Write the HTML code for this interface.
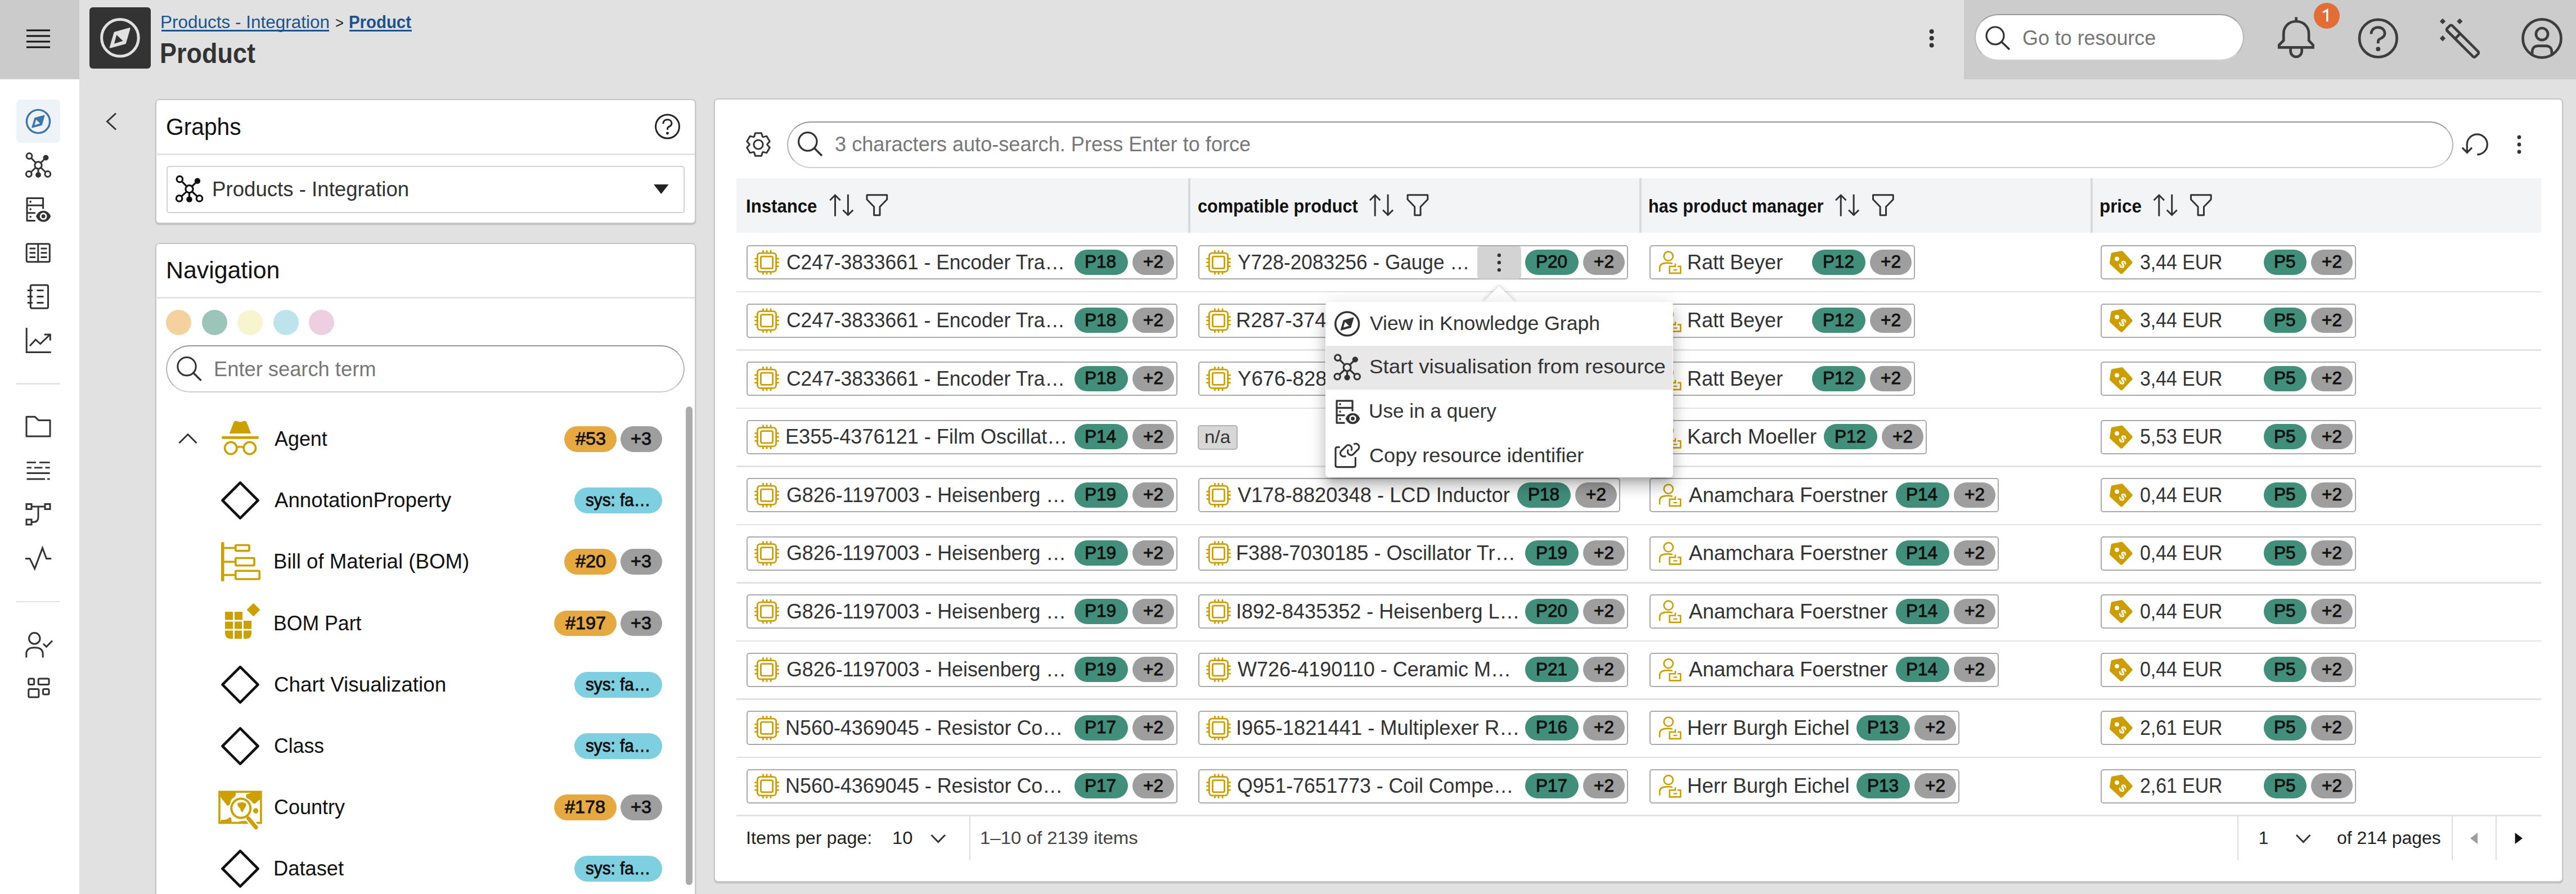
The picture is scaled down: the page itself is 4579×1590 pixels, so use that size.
<!DOCTYPE html>
<html><head><meta charset="utf-8"><title>Product</title>
<style>
html,body{margin:0;padding:0}
body{width:4579px;height:1590px;overflow:hidden;position:relative;background:#e1e1e1;font-family:"Liberation Sans",sans-serif;color:#222}
.a,.c{position:absolute}
.t{position:absolute;white-space:nowrap;line-height:1;transform-origin:0 0}
svg{position:absolute;left:0;top:0;overflow:visible}
</style></head><body>
<div class="a" style="left:0;top:0;width:141px;height:1590px;background:#fff"></div>
<div class="a" style="left:0;top:0;width:141px;height:141px;background:#cbcbcb"></div>
<div class="a" style="left:29px;top:177px;width:78px;height:77px;background:#eef3f8;border-radius:7px"></div>
<div class="a" style="left:29px;top:680.5px;width:78px;height:3px;background:#e4e4e4"></div>
<div class="a" style="left:29px;top:1069px;width:78px;height:2px;background:#e4e4e4"></div>
<div class="a" style="left:3491px;top:0;width:1088px;height:141px;background:#cccccc"></div>
<div class="a" style="left:159px;top:13px;width:109px;height:109px;background:#333;border-radius:6px"></div>
<div class="a" style="left:3510px;top:25px;width:479px;height:83px;box-sizing:border-box;background:#fff;border:2.2px solid;border-color:#9a9a9a #b8b8b8 #d0d0d0 #b8b8b8;border-radius:42px"></div>
<div class="a" style="left:4113px;top:5px;width:46px;height:46px;border-radius:50%;background:#e36d37"></div>
<div class="a" style="left:275.5px;top:175.5px;width:961px;height:222px;background:#fff;border:2px solid #c6c6c6;border-radius:7px;box-shadow:0 2px 2px rgba(0,0,0,.16);box-sizing:border-box"></div>
<div class="a" style="left:277px;top:273px;width:958px;height:3px;background:#e2e2e2"></div>
<div class="a" style="left:296px;top:295px;width:921px;height:84px;box-sizing:border-box;border:2px solid #d2d2d2;border-radius:5px"></div>
<div class="a" style="left:275.5px;top:432px;width:961px;height:1200px;background:#fff;border:2px solid #c6c6c6;border-radius:7px;box-shadow:0 2px 2px rgba(0,0,0,.16);box-sizing:border-box"></div>
<div class="a" style="left:277px;top:528px;width:958px;height:3px;background:#e2e2e2"></div>
<div class="a" style="left:295.1px;top:551px;width:45px;height:45px;border-radius:50%;background:#f3d29d"></div>
<div class="a" style="left:358.5px;top:551px;width:45px;height:45px;border-radius:50%;background:#9cc5b9"></div>
<div class="a" style="left:422.0px;top:551px;width:45px;height:45px;border-radius:50%;background:#f7f4d0"></div>
<div class="a" style="left:485.5px;top:551px;width:45px;height:45px;border-radius:50%;background:#bde4ed"></div>
<div class="a" style="left:549.0px;top:551px;width:45px;height:45px;border-radius:50%;background:#edcfe1"></div>
<div class="a" style="left:295px;top:614.3px;width:922px;height:84px;box-sizing:border-box;border:2.2px solid;border-color:#949494 #b4b4b4 #cdcdcd #b4b4b4;border-radius:42px"></div>
<div class="a" style="left:1219px;top:723px;width:12px;height:851px;background:#ababab;border-radius:6px"></div>
<div class="a" style="left:1269px;top:175px;width:3287px;height:1393.5px;background:#fff;border:2px solid #c6c6c6;border-radius:7px;box-shadow:0 2px 2px rgba(0,0,0,.16);box-sizing:border-box"></div>
<div class="a" style="left:1399px;top:215.5px;width:2962px;height:83px;box-sizing:border-box;border:2.2px solid;border-color:#949494 #b4b4b4 #cdcdcd #b4b4b4;border-radius:42px"></div>
<div class="a" style="left:1309px;top:316.5px;width:3208px;height:97px;background:#f3f4f6"></div>
<div class="a" style="left:2111.5px;top:316.5px;width:4px;height:97px;background:#d9dadc"></div>
<div class="a" style="left:2913.5px;top:316.5px;width:4px;height:97px;background:#d9dadc"></div>
<div class="a" style="left:3715.5px;top:316.5px;width:4px;height:97px;background:#d9dadc"></div>
<div class="a" style="left:1309px;top:517.8px;width:3208px;height:2.5px;background:#e2e2e2"></div>
<div class="a" style="left:1309px;top:621.3px;width:3208px;height:2.5px;background:#e2e2e2"></div>
<div class="a" style="left:1309px;top:724.8px;width:3208px;height:2.5px;background:#e2e2e2"></div>
<div class="a" style="left:1309px;top:828.3px;width:3208px;height:2.5px;background:#e2e2e2"></div>
<div class="a" style="left:1309px;top:931.8px;width:3208px;height:2.5px;background:#e2e2e2"></div>
<div class="a" style="left:1309px;top:1035.3px;width:3208px;height:2.5px;background:#e2e2e2"></div>
<div class="a" style="left:1309px;top:1138.8px;width:3208px;height:2.5px;background:#e2e2e2"></div>
<div class="a" style="left:1309px;top:1242.3px;width:3208px;height:2.5px;background:#e2e2e2"></div>
<div class="a" style="left:1309px;top:1345.8px;width:3208px;height:2.5px;background:#e2e2e2"></div>
<div class="a" style="left:1309px;top:1449.3px;width:3208px;height:2.5px;background:#e2e2e2"></div>
<div class="a" style="left:1722.5px;top:1452px;width:2px;height:78px;background:#dcdcdc"></div>
<div class="a" style="left:3977px;top:1452px;width:2px;height:78px;background:#dcdcdc"></div>
<div class="a" style="left:4357.5px;top:1452px;width:2px;height:78px;background:#dcdcdc"></div>
<div class="a" style="left:4436px;top:1452px;width:2px;height:78px;background:#dcdcdc"></div>
<div class="a" style="left:287px;top:53px;width:298px;height:2.8px;background:#1b5391"></div>
<div class="a" style="left:621px;top:53px;width:111px;height:2.8px;background:#1b5391"></div>
<div class="a" style="left:1003.0px;top:758.2px;width:92.7px;height:45.7px;border-radius:23px;background:#e6a940"></div>
<div class="a" style="left:1103px;top:758.2px;width:74px;height:45.7px;border-radius:23px;background:#9e9e9e"></div>
<div class="a" style="left:1020.7px;top:867.2px;width:156.3px;height:45.7px;border-radius:23px;background:#7ecfe0"></div>
<div class="a" style="left:1003.0px;top:976.2px;width:92.7px;height:45.7px;border-radius:23px;background:#e6a940"></div>
<div class="a" style="left:1103px;top:976.2px;width:74px;height:45.7px;border-radius:23px;background:#9e9e9e"></div>
<div class="a" style="left:984.7px;top:1085.7px;width:111px;height:45.7px;border-radius:23px;background:#e6a940"></div>
<div class="a" style="left:1103px;top:1085.7px;width:74px;height:45.7px;border-radius:23px;background:#9e9e9e"></div>
<div class="a" style="left:1020.7px;top:1194.9px;width:156.3px;height:45.7px;border-radius:23px;background:#7ecfe0"></div>
<div class="a" style="left:1020.7px;top:1304.2px;width:156.3px;height:45.7px;border-radius:23px;background:#7ecfe0"></div>
<div class="a" style="left:984.7px;top:1413.2px;width:111px;height:45.7px;border-radius:23px;background:#e6a940"></div>
<div class="a" style="left:1103px;top:1413.2px;width:74px;height:45.7px;border-radius:23px;background:#9e9e9e"></div>
<div class="a" style="left:1020.7px;top:1522.2px;width:156.3px;height:45.7px;border-radius:23px;background:#7ecfe0"></div>
<div class="c" style="left:1327px;top:436.2px;width:765.5px;height:61px;position:absolute;box-sizing:border-box;border:2px solid #a9a9a9;border-radius:5px;background:#fff"></div>
<div class="a" style="left:2012.5px;top:443.7px;width:74px;height:45px;border-radius:23px;background:#9e9e9e"></div>
<div class="a" style="left:1909.5px;top:443.7px;width:95px;height:45px;border-radius:23px;background:#418e7b"></div>
<div class="c" style="left:2130px;top:436.2px;width:764.0px;height:61px;position:absolute;box-sizing:border-box;border:2px solid #a9a9a9;border-radius:5px;background:#fff"></div>
<div class="a" style="left:2814.0px;top:443.7px;width:74px;height:45px;border-radius:23px;background:#9e9e9e"></div>
<div class="a" style="left:2711.0px;top:443.7px;width:95px;height:45px;border-radius:23px;background:#418e7b"></div>
<div class="a" style="left:2626px;top:437.7px;width:78px;height:58px;background:#d3d3d3;border-radius:5px"></div>
<div class="c" style="left:2932px;top:436.2px;width:472.0px;height:61px;position:absolute;box-sizing:border-box;border:2px solid #a9a9a9;border-radius:5px;background:#fff"></div>
<div class="a" style="left:3324.0px;top:443.7px;width:74px;height:45px;border-radius:23px;background:#9e9e9e"></div>
<div class="a" style="left:3221.0px;top:443.7px;width:95px;height:45px;border-radius:23px;background:#418e7b"></div>
<div class="c" style="left:3734px;top:436.2px;width:454.0px;height:61px;position:absolute;box-sizing:border-box;border:2px solid #a9a9a9;border-radius:5px;background:#fff"></div>
<div class="a" style="left:4108.0px;top:443.7px;width:74px;height:45px;border-radius:23px;background:#9e9e9e"></div>
<div class="a" style="left:4023.6px;top:443.7px;width:76.4px;height:45px;border-radius:23px;background:#418e7b"></div>
<div class="c" style="left:1327px;top:539.7px;width:765.5px;height:61px;position:absolute;box-sizing:border-box;border:2px solid #a9a9a9;border-radius:5px;background:#fff"></div>
<div class="a" style="left:2012.5px;top:547.2px;width:74px;height:45px;border-radius:23px;background:#9e9e9e"></div>
<div class="a" style="left:1909.5px;top:547.2px;width:95px;height:45px;border-radius:23px;background:#418e7b"></div>
<div class="c" style="left:2130px;top:539.7px;width:764.0px;height:61px;position:absolute;box-sizing:border-box;border:2px solid #a9a9a9;border-radius:5px;background:#fff"></div>
<div class="a" style="left:2814.0px;top:547.2px;width:74px;height:45px;border-radius:23px;background:#9e9e9e"></div>
<div class="a" style="left:2711.0px;top:547.2px;width:95px;height:45px;border-radius:23px;background:#418e7b"></div>
<div class="c" style="left:2932px;top:539.7px;width:472.0px;height:61px;position:absolute;box-sizing:border-box;border:2px solid #a9a9a9;border-radius:5px;background:#fff"></div>
<div class="a" style="left:3324.0px;top:547.2px;width:74px;height:45px;border-radius:23px;background:#9e9e9e"></div>
<div class="a" style="left:3221.0px;top:547.2px;width:95px;height:45px;border-radius:23px;background:#418e7b"></div>
<div class="c" style="left:3734px;top:539.7px;width:454.0px;height:61px;position:absolute;box-sizing:border-box;border:2px solid #a9a9a9;border-radius:5px;background:#fff"></div>
<div class="a" style="left:4108.0px;top:547.2px;width:74px;height:45px;border-radius:23px;background:#9e9e9e"></div>
<div class="a" style="left:4023.6px;top:547.2px;width:76.4px;height:45px;border-radius:23px;background:#418e7b"></div>
<div class="c" style="left:1327px;top:643.2px;width:765.5px;height:61px;position:absolute;box-sizing:border-box;border:2px solid #a9a9a9;border-radius:5px;background:#fff"></div>
<div class="a" style="left:2012.5px;top:650.7px;width:74px;height:45px;border-radius:23px;background:#9e9e9e"></div>
<div class="a" style="left:1909.5px;top:650.7px;width:95px;height:45px;border-radius:23px;background:#418e7b"></div>
<div class="c" style="left:2130px;top:643.2px;width:764.0px;height:61px;position:absolute;box-sizing:border-box;border:2px solid #a9a9a9;border-radius:5px;background:#fff"></div>
<div class="a" style="left:2814.0px;top:650.7px;width:74px;height:45px;border-radius:23px;background:#9e9e9e"></div>
<div class="a" style="left:2711.0px;top:650.7px;width:95px;height:45px;border-radius:23px;background:#418e7b"></div>
<div class="c" style="left:2932px;top:643.2px;width:472.0px;height:61px;position:absolute;box-sizing:border-box;border:2px solid #a9a9a9;border-radius:5px;background:#fff"></div>
<div class="a" style="left:3324.0px;top:650.7px;width:74px;height:45px;border-radius:23px;background:#9e9e9e"></div>
<div class="a" style="left:3221.0px;top:650.7px;width:95px;height:45px;border-radius:23px;background:#418e7b"></div>
<div class="c" style="left:3734px;top:643.2px;width:454.0px;height:61px;position:absolute;box-sizing:border-box;border:2px solid #a9a9a9;border-radius:5px;background:#fff"></div>
<div class="a" style="left:4108.0px;top:650.7px;width:74px;height:45px;border-radius:23px;background:#9e9e9e"></div>
<div class="a" style="left:4023.6px;top:650.7px;width:76.4px;height:45px;border-radius:23px;background:#418e7b"></div>
<div class="c" style="left:1327px;top:746.7px;width:765.5px;height:61px;position:absolute;box-sizing:border-box;border:2px solid #a9a9a9;border-radius:5px;background:#fff"></div>
<div class="a" style="left:2012.5px;top:754.2px;width:74px;height:45px;border-radius:23px;background:#9e9e9e"></div>
<div class="a" style="left:1909.5px;top:754.2px;width:95px;height:45px;border-radius:23px;background:#418e7b"></div>
<div class="a" style="left:2129.4px;top:756.2px;width:71px;height:44px;box-sizing:border-box;background:#d7d7d7;border:2px solid #b3b3b3;border-radius:5px"></div>
<div class="c" style="left:2932px;top:746.7px;width:493.0px;height:61px;position:absolute;box-sizing:border-box;border:2px solid #a9a9a9;border-radius:5px;background:#fff"></div>
<div class="a" style="left:3345.0px;top:754.2px;width:74px;height:45px;border-radius:23px;background:#9e9e9e"></div>
<div class="a" style="left:3242.0px;top:754.2px;width:95px;height:45px;border-radius:23px;background:#418e7b"></div>
<div class="c" style="left:3734px;top:746.7px;width:454.0px;height:61px;position:absolute;box-sizing:border-box;border:2px solid #a9a9a9;border-radius:5px;background:#fff"></div>
<div class="a" style="left:4108.0px;top:754.2px;width:74px;height:45px;border-radius:23px;background:#9e9e9e"></div>
<div class="a" style="left:4023.6px;top:754.2px;width:76.4px;height:45px;border-radius:23px;background:#418e7b"></div>
<div class="c" style="left:1327px;top:850.2px;width:765.5px;height:61px;position:absolute;box-sizing:border-box;border:2px solid #a9a9a9;border-radius:5px;background:#fff"></div>
<div class="a" style="left:2012.5px;top:857.7px;width:74px;height:45px;border-radius:23px;background:#9e9e9e"></div>
<div class="a" style="left:1909.5px;top:857.7px;width:95px;height:45px;border-radius:23px;background:#418e7b"></div>
<div class="c" style="left:2130px;top:850.2px;width:750.0px;height:61px;position:absolute;box-sizing:border-box;border:2px solid #a9a9a9;border-radius:5px;background:#fff"></div>
<div class="a" style="left:2800.0px;top:857.7px;width:74px;height:45px;border-radius:23px;background:#9e9e9e"></div>
<div class="a" style="left:2697.0px;top:857.7px;width:95px;height:45px;border-radius:23px;background:#418e7b"></div>
<div class="c" style="left:2932px;top:850.2px;width:621.0px;height:61px;position:absolute;box-sizing:border-box;border:2px solid #a9a9a9;border-radius:5px;background:#fff"></div>
<div class="a" style="left:3473.0px;top:857.7px;width:74px;height:45px;border-radius:23px;background:#9e9e9e"></div>
<div class="a" style="left:3370.0px;top:857.7px;width:95px;height:45px;border-radius:23px;background:#418e7b"></div>
<div class="c" style="left:3734px;top:850.2px;width:454.0px;height:61px;position:absolute;box-sizing:border-box;border:2px solid #a9a9a9;border-radius:5px;background:#fff"></div>
<div class="a" style="left:4108.0px;top:857.7px;width:74px;height:45px;border-radius:23px;background:#9e9e9e"></div>
<div class="a" style="left:4023.6px;top:857.7px;width:76.4px;height:45px;border-radius:23px;background:#418e7b"></div>
<div class="c" style="left:1327px;top:953.7px;width:765.5px;height:61px;position:absolute;box-sizing:border-box;border:2px solid #a9a9a9;border-radius:5px;background:#fff"></div>
<div class="a" style="left:2012.5px;top:961.2px;width:74px;height:45px;border-radius:23px;background:#9e9e9e"></div>
<div class="a" style="left:1909.5px;top:961.2px;width:95px;height:45px;border-radius:23px;background:#418e7b"></div>
<div class="c" style="left:2130px;top:953.7px;width:764.0px;height:61px;position:absolute;box-sizing:border-box;border:2px solid #a9a9a9;border-radius:5px;background:#fff"></div>
<div class="a" style="left:2814.0px;top:961.2px;width:74px;height:45px;border-radius:23px;background:#9e9e9e"></div>
<div class="a" style="left:2711.0px;top:961.2px;width:95px;height:45px;border-radius:23px;background:#418e7b"></div>
<div class="c" style="left:2932px;top:953.7px;width:621.0px;height:61px;position:absolute;box-sizing:border-box;border:2px solid #a9a9a9;border-radius:5px;background:#fff"></div>
<div class="a" style="left:3473.0px;top:961.2px;width:74px;height:45px;border-radius:23px;background:#9e9e9e"></div>
<div class="a" style="left:3370.0px;top:961.2px;width:95px;height:45px;border-radius:23px;background:#418e7b"></div>
<div class="c" style="left:3734px;top:953.7px;width:454.0px;height:61px;position:absolute;box-sizing:border-box;border:2px solid #a9a9a9;border-radius:5px;background:#fff"></div>
<div class="a" style="left:4108.0px;top:961.2px;width:74px;height:45px;border-radius:23px;background:#9e9e9e"></div>
<div class="a" style="left:4023.6px;top:961.2px;width:76.4px;height:45px;border-radius:23px;background:#418e7b"></div>
<div class="c" style="left:1327px;top:1057.2px;width:765.5px;height:61px;position:absolute;box-sizing:border-box;border:2px solid #a9a9a9;border-radius:5px;background:#fff"></div>
<div class="a" style="left:2012.5px;top:1064.7px;width:74px;height:45px;border-radius:23px;background:#9e9e9e"></div>
<div class="a" style="left:1909.5px;top:1064.7px;width:95px;height:45px;border-radius:23px;background:#418e7b"></div>
<div class="c" style="left:2130px;top:1057.2px;width:764.0px;height:61px;position:absolute;box-sizing:border-box;border:2px solid #a9a9a9;border-radius:5px;background:#fff"></div>
<div class="a" style="left:2814.0px;top:1064.7px;width:74px;height:45px;border-radius:23px;background:#9e9e9e"></div>
<div class="a" style="left:2711.0px;top:1064.7px;width:95px;height:45px;border-radius:23px;background:#418e7b"></div>
<div class="c" style="left:2932px;top:1057.2px;width:621.0px;height:61px;position:absolute;box-sizing:border-box;border:2px solid #a9a9a9;border-radius:5px;background:#fff"></div>
<div class="a" style="left:3473.0px;top:1064.7px;width:74px;height:45px;border-radius:23px;background:#9e9e9e"></div>
<div class="a" style="left:3370.0px;top:1064.7px;width:95px;height:45px;border-radius:23px;background:#418e7b"></div>
<div class="c" style="left:3734px;top:1057.2px;width:454.0px;height:61px;position:absolute;box-sizing:border-box;border:2px solid #a9a9a9;border-radius:5px;background:#fff"></div>
<div class="a" style="left:4108.0px;top:1064.7px;width:74px;height:45px;border-radius:23px;background:#9e9e9e"></div>
<div class="a" style="left:4023.6px;top:1064.7px;width:76.4px;height:45px;border-radius:23px;background:#418e7b"></div>
<div class="c" style="left:1327px;top:1160.7px;width:765.5px;height:61px;position:absolute;box-sizing:border-box;border:2px solid #a9a9a9;border-radius:5px;background:#fff"></div>
<div class="a" style="left:2012.5px;top:1168.2px;width:74px;height:45px;border-radius:23px;background:#9e9e9e"></div>
<div class="a" style="left:1909.5px;top:1168.2px;width:95px;height:45px;border-radius:23px;background:#418e7b"></div>
<div class="c" style="left:2130px;top:1160.7px;width:764.0px;height:61px;position:absolute;box-sizing:border-box;border:2px solid #a9a9a9;border-radius:5px;background:#fff"></div>
<div class="a" style="left:2814.0px;top:1168.2px;width:74px;height:45px;border-radius:23px;background:#9e9e9e"></div>
<div class="a" style="left:2711.0px;top:1168.2px;width:95px;height:45px;border-radius:23px;background:#418e7b"></div>
<div class="c" style="left:2932px;top:1160.7px;width:621.0px;height:61px;position:absolute;box-sizing:border-box;border:2px solid #a9a9a9;border-radius:5px;background:#fff"></div>
<div class="a" style="left:3473.0px;top:1168.2px;width:74px;height:45px;border-radius:23px;background:#9e9e9e"></div>
<div class="a" style="left:3370.0px;top:1168.2px;width:95px;height:45px;border-radius:23px;background:#418e7b"></div>
<div class="c" style="left:3734px;top:1160.7px;width:454.0px;height:61px;position:absolute;box-sizing:border-box;border:2px solid #a9a9a9;border-radius:5px;background:#fff"></div>
<div class="a" style="left:4108.0px;top:1168.2px;width:74px;height:45px;border-radius:23px;background:#9e9e9e"></div>
<div class="a" style="left:4023.6px;top:1168.2px;width:76.4px;height:45px;border-radius:23px;background:#418e7b"></div>
<div class="c" style="left:1327px;top:1264.2px;width:765.5px;height:61px;position:absolute;box-sizing:border-box;border:2px solid #a9a9a9;border-radius:5px;background:#fff"></div>
<div class="a" style="left:2012.5px;top:1271.7px;width:74px;height:45px;border-radius:23px;background:#9e9e9e"></div>
<div class="a" style="left:1909.5px;top:1271.7px;width:95px;height:45px;border-radius:23px;background:#418e7b"></div>
<div class="c" style="left:2130px;top:1264.2px;width:764.0px;height:61px;position:absolute;box-sizing:border-box;border:2px solid #a9a9a9;border-radius:5px;background:#fff"></div>
<div class="a" style="left:2814.0px;top:1271.7px;width:74px;height:45px;border-radius:23px;background:#9e9e9e"></div>
<div class="a" style="left:2711.0px;top:1271.7px;width:95px;height:45px;border-radius:23px;background:#418e7b"></div>
<div class="c" style="left:2932px;top:1264.2px;width:551.0px;height:61px;position:absolute;box-sizing:border-box;border:2px solid #a9a9a9;border-radius:5px;background:#fff"></div>
<div class="a" style="left:3403.0px;top:1271.7px;width:74px;height:45px;border-radius:23px;background:#9e9e9e"></div>
<div class="a" style="left:3300.0px;top:1271.7px;width:95px;height:45px;border-radius:23px;background:#418e7b"></div>
<div class="c" style="left:3734px;top:1264.2px;width:454.0px;height:61px;position:absolute;box-sizing:border-box;border:2px solid #a9a9a9;border-radius:5px;background:#fff"></div>
<div class="a" style="left:4108.0px;top:1271.7px;width:74px;height:45px;border-radius:23px;background:#9e9e9e"></div>
<div class="a" style="left:4023.6px;top:1271.7px;width:76.4px;height:45px;border-radius:23px;background:#418e7b"></div>
<div class="c" style="left:1327px;top:1367.7px;width:765.5px;height:61px;position:absolute;box-sizing:border-box;border:2px solid #a9a9a9;border-radius:5px;background:#fff"></div>
<div class="a" style="left:2012.5px;top:1375.2px;width:74px;height:45px;border-radius:23px;background:#9e9e9e"></div>
<div class="a" style="left:1909.5px;top:1375.2px;width:95px;height:45px;border-radius:23px;background:#418e7b"></div>
<div class="c" style="left:2130px;top:1367.7px;width:764.0px;height:61px;position:absolute;box-sizing:border-box;border:2px solid #a9a9a9;border-radius:5px;background:#fff"></div>
<div class="a" style="left:2814.0px;top:1375.2px;width:74px;height:45px;border-radius:23px;background:#9e9e9e"></div>
<div class="a" style="left:2711.0px;top:1375.2px;width:95px;height:45px;border-radius:23px;background:#418e7b"></div>
<div class="c" style="left:2932px;top:1367.7px;width:551.0px;height:61px;position:absolute;box-sizing:border-box;border:2px solid #a9a9a9;border-radius:5px;background:#fff"></div>
<div class="a" style="left:3403.0px;top:1375.2px;width:74px;height:45px;border-radius:23px;background:#9e9e9e"></div>
<div class="a" style="left:3300.0px;top:1375.2px;width:95px;height:45px;border-radius:23px;background:#418e7b"></div>
<div class="c" style="left:3734px;top:1367.7px;width:454.0px;height:61px;position:absolute;box-sizing:border-box;border:2px solid #a9a9a9;border-radius:5px;background:#fff"></div>
<div class="a" style="left:4108.0px;top:1375.2px;width:74px;height:45px;border-radius:23px;background:#9e9e9e"></div>
<div class="a" style="left:4023.6px;top:1375.2px;width:76.4px;height:45px;border-radius:23px;background:#418e7b"></div>
<div class="t" style="left:285.00px;top:24.40px;font-size:31.42px;color:#1b5391;transform:scaleX(1.0024)">Products - Integration</div>
<div class="t" style="left:595.85px;top:27.64px;font-size:27px;color:#222;transform:scaleX(0.9500)">></div>
<div class="t" style="left:620.13px;top:24.40px;font-size:31.42px;color:#1b5391;font-weight:bold;transform:scaleX(0.9352)">Product</div>
<div class="t" style="left:284.32px;top:70.44px;font-size:50.28px;color:#333;font-weight:bold;transform:scaleX(0.8950)">Product</div>
<div class="t" style="left:3595.01px;top:50.26px;font-size:36.31px;color:#777;transform:scaleX(0.9879)">Go to resource</div>
<div class="t" style="left:295.10px;top:203.70px;font-size:42.88px;color:#111;transform:scaleX(0.9507)">Graphs</div>
<div class="t" style="left:376.98px;top:319.26px;font-size:36.31px;color:#333;transform:scaleX(1.0092)">Products - Integration</div>
<div class="t" style="left:294.96px;top:460.18px;font-size:42.32px;color:#111;transform:scaleX(1.0124)">Navigation</div>
<div class="t" style="left:380.00px;top:639.26px;font-size:36.31px;color:#777">Enter search term</div>
<div class="t" style="left:1484.00px;top:238.96px;font-size:36.31px;color:#777;transform:scaleX(0.9957)">3 characters auto-search. Press Enter to force</div>
<div class="t" style="left:1326.14px;top:349.63px;font-size:33.52px;color:#111;font-weight:bold;transform:scaleX(0.9300)">Instance</div>
<div class="t" style="left:2129.08px;top:349.63px;font-size:33.52px;color:#111;font-weight:bold;transform:scaleX(0.9157)">compatible product</div>
<div class="t" style="left:2930.17px;top:349.63px;font-size:33.52px;color:#111;font-weight:bold;transform:scaleX(0.9139)">has product manager</div>
<div class="t" style="left:3731.73px;top:349.63px;font-size:33.52px;color:#111;font-weight:bold;transform:scaleX(0.9346)">price</div>
<div class="t" style="left:488.00px;top:763.18px;font-size:36.17px;color:#111;transform:scaleX(0.9922)">Agent</div>
<div class="t" style="left:1022.58px;top:765.38px;font-size:31.56px;color:#111;-webkit-text-stroke:0.9px #111;transform:scaleX(1.0277)">#53</div>
<div class="t" style="left:1121.28px;top:765.38px;font-size:31.56px;color:#111;-webkit-text-stroke:0.9px #111;transform:scaleX(1.0277)">+3</div>
<div class="t" style="left:488.00px;top:872.18px;font-size:36.17px;color:#111;transform:scaleX(1.0147)">AnnotationProperty</div>
<div class="t" style="left:1041.00px;top:874.38px;font-size:31.56px;color:#111;-webkit-text-stroke:0.9px #111;transform:scaleX(0.9399)">sys: fa…</div>
<div class="t" style="left:485.97px;top:981.18px;font-size:36.17px;color:#111;transform:scaleX(1.0133)">Bill of Material (BOM)</div>
<div class="t" style="left:1022.58px;top:983.38px;font-size:31.56px;color:#111;-webkit-text-stroke:0.9px #111;transform:scaleX(1.0277)">#20</div>
<div class="t" style="left:1121.28px;top:983.38px;font-size:31.56px;color:#111;-webkit-text-stroke:0.9px #111;transform:scaleX(1.0277)">+3</div>
<div class="t" style="left:486.03px;top:1090.68px;font-size:36.17px;color:#111;transform:scaleX(0.9855)">BOM Part</div>
<div class="t" style="left:1004.93px;top:1092.88px;font-size:31.56px;color:#111;-webkit-text-stroke:0.9px #111;transform:scaleX(1.0277)">#197</div>
<div class="t" style="left:1121.28px;top:1092.88px;font-size:31.56px;color:#111;-webkit-text-stroke:0.9px #111;transform:scaleX(1.0277)">+3</div>
<div class="t" style="left:486.98px;top:1199.88px;font-size:36.17px;color:#111;transform:scaleX(1.0178)">Chart Visualization</div>
<div class="t" style="left:1041.00px;top:1202.08px;font-size:31.56px;color:#111;-webkit-text-stroke:0.9px #111;transform:scaleX(0.9399)">sys: fa…</div>
<div class="t" style="left:487.02px;top:1309.18px;font-size:36.17px;color:#111;transform:scaleX(0.9849)">Class</div>
<div class="t" style="left:1041.00px;top:1311.38px;font-size:31.56px;color:#111;-webkit-text-stroke:0.9px #111;transform:scaleX(0.9399)">sys: fa…</div>
<div class="t" style="left:487.00px;top:1418.18px;font-size:36.17px;color:#111;transform:scaleX(0.9958)">Country</div>
<div class="t" style="left:1004.42px;top:1420.38px;font-size:31.56px;color:#111;-webkit-text-stroke:0.9px #111;transform:scaleX(1.0277)">#178</div>
<div class="t" style="left:1121.28px;top:1420.38px;font-size:31.56px;color:#111;-webkit-text-stroke:0.9px #111;transform:scaleX(1.0277)">+3</div>
<div class="t" style="left:485.99px;top:1527.18px;font-size:36.17px;color:#111;transform:scaleX(1.0036)">Dataset</div>
<div class="t" style="left:1041.00px;top:1529.38px;font-size:31.56px;color:#111;-webkit-text-stroke:0.9px #111;transform:scaleX(0.9399)">sys: fa…</div>
<div class="t" style="left:2031.55px;top:451.49px;font-size:30.73px;color:#111;-webkit-text-stroke:0.9px #111;transform:scaleX(1.0277)">+2</div>
<div class="t" style="left:1928.44px;top:451.49px;font-size:30.73px;color:#111;-webkit-text-stroke:0.9px #111;transform:scaleX(1.0277)">P18</div>
<div class="t" style="left:1397.93px;top:448.53px;font-size:36.59px;color:#333;transform:scaleX(0.9696)">C247-3833661 - Encoder Tra…</div>
<div class="t" style="left:2833.05px;top:451.49px;font-size:30.73px;color:#111;-webkit-text-stroke:0.9px #111;transform:scaleX(1.0277)">+2</div>
<div class="t" style="left:2729.94px;top:451.49px;font-size:30.73px;color:#111;-webkit-text-stroke:0.9px #111;transform:scaleX(1.0277)">P20</div>
<div class="t" style="left:2200.00px;top:448.53px;font-size:36.59px;color:#333;transform:scaleX(0.9611)">Y728-2083256 - Gauge …</div>
<div class="t" style="left:3343.05px;top:451.49px;font-size:30.73px;color:#111;-webkit-text-stroke:0.9px #111;transform:scaleX(1.0277)">+2</div>
<div class="t" style="left:3239.94px;top:451.49px;font-size:30.73px;color:#111;-webkit-text-stroke:0.9px #111;transform:scaleX(1.0277)">P12</div>
<div class="t" style="left:2999.05px;top:448.53px;font-size:36.59px;color:#333;transform:scaleX(0.9846)">Ratt Beyer</div>
<div class="t" style="left:4127.05px;top:451.49px;font-size:30.73px;color:#111;-webkit-text-stroke:0.9px #111;transform:scaleX(1.0277)">+2</div>
<div class="t" style="left:4042.02px;top:451.49px;font-size:30.73px;color:#111;-webkit-text-stroke:0.9px #111;transform:scaleX(1.0277)">P5</div>
<div class="t" style="left:3804.08px;top:448.53px;font-size:36.59px;color:#333;transform:scaleX(0.9240)">3,44 EUR</div>
<div class="t" style="left:2031.55px;top:554.99px;font-size:30.73px;color:#111;-webkit-text-stroke:0.9px #111;transform:scaleX(1.0277)">+2</div>
<div class="t" style="left:1928.44px;top:554.99px;font-size:30.73px;color:#111;-webkit-text-stroke:0.9px #111;transform:scaleX(1.0277)">P18</div>
<div class="t" style="left:1397.93px;top:552.03px;font-size:36.59px;color:#333;transform:scaleX(0.9696)">C247-3833661 - Encoder Tra…</div>
<div class="t" style="left:2833.05px;top:554.99px;font-size:30.73px;color:#111;-webkit-text-stroke:0.9px #111;transform:scaleX(1.0277)">+2</div>
<div class="t" style="left:2729.94px;top:554.99px;font-size:30.73px;color:#111;-webkit-text-stroke:0.9px #111;transform:scaleX(1.0277)">P20</div>
<div class="t" style="left:2197.00px;top:552.03px;font-size:36.59px;color:#333">R287-3745128 - Sensor Mo…</div>
<div class="t" style="left:3343.05px;top:554.99px;font-size:30.73px;color:#111;-webkit-text-stroke:0.9px #111;transform:scaleX(1.0277)">+2</div>
<div class="t" style="left:3239.94px;top:554.99px;font-size:30.73px;color:#111;-webkit-text-stroke:0.9px #111;transform:scaleX(1.0277)">P12</div>
<div class="t" style="left:2999.05px;top:552.03px;font-size:36.59px;color:#333;transform:scaleX(0.9846)">Ratt Beyer</div>
<div class="t" style="left:4127.05px;top:554.99px;font-size:30.73px;color:#111;-webkit-text-stroke:0.9px #111;transform:scaleX(1.0277)">+2</div>
<div class="t" style="left:4042.02px;top:554.99px;font-size:30.73px;color:#111;-webkit-text-stroke:0.9px #111;transform:scaleX(1.0277)">P5</div>
<div class="t" style="left:3804.08px;top:552.03px;font-size:36.59px;color:#333;transform:scaleX(0.9240)">3,44 EUR</div>
<div class="t" style="left:2031.55px;top:658.49px;font-size:30.73px;color:#111;-webkit-text-stroke:0.9px #111;transform:scaleX(1.0277)">+2</div>
<div class="t" style="left:1928.44px;top:658.49px;font-size:30.73px;color:#111;-webkit-text-stroke:0.9px #111;transform:scaleX(1.0277)">P18</div>
<div class="t" style="left:1397.93px;top:655.53px;font-size:36.59px;color:#333;transform:scaleX(0.9696)">C247-3833661 - Encoder Tra…</div>
<div class="t" style="left:2833.05px;top:658.49px;font-size:30.73px;color:#111;-webkit-text-stroke:0.9px #111;transform:scaleX(1.0277)">+2</div>
<div class="t" style="left:2729.94px;top:658.49px;font-size:30.73px;color:#111;-webkit-text-stroke:0.9px #111;transform:scaleX(1.0277)">P19</div>
<div class="t" style="left:2200.00px;top:655.53px;font-size:36.59px;color:#333">Y676-8281730 - Fuse Conn…</div>
<div class="t" style="left:3343.05px;top:658.49px;font-size:30.73px;color:#111;-webkit-text-stroke:0.9px #111;transform:scaleX(1.0277)">+2</div>
<div class="t" style="left:3239.94px;top:658.49px;font-size:30.73px;color:#111;-webkit-text-stroke:0.9px #111;transform:scaleX(1.0277)">P12</div>
<div class="t" style="left:2999.05px;top:655.53px;font-size:36.59px;color:#333;transform:scaleX(0.9846)">Ratt Beyer</div>
<div class="t" style="left:4127.05px;top:658.49px;font-size:30.73px;color:#111;-webkit-text-stroke:0.9px #111;transform:scaleX(1.0277)">+2</div>
<div class="t" style="left:4042.02px;top:658.49px;font-size:30.73px;color:#111;-webkit-text-stroke:0.9px #111;transform:scaleX(1.0277)">P5</div>
<div class="t" style="left:3804.08px;top:655.53px;font-size:36.59px;color:#333;transform:scaleX(0.9240)">3,44 EUR</div>
<div class="t" style="left:2031.55px;top:761.99px;font-size:30.73px;color:#111;-webkit-text-stroke:0.9px #111;transform:scaleX(1.0277)">+2</div>
<div class="t" style="left:1927.93px;top:761.99px;font-size:30.73px;color:#111;-webkit-text-stroke:0.9px #111;transform:scaleX(1.0277)">P14</div>
<div class="t" style="left:1395.94px;top:759.03px;font-size:36.59px;color:#333;transform:scaleX(0.9865)">E355-4376121 - Film Oscillat…</div>
<div class="t" style="left:2140.72px;top:762.08px;font-size:31.8px;color:#333;transform:scaleX(1.0419)">n/a</div>
<div class="t" style="left:3364.05px;top:761.99px;font-size:30.73px;color:#111;-webkit-text-stroke:0.9px #111;transform:scaleX(1.0277)">+2</div>
<div class="t" style="left:3260.94px;top:761.99px;font-size:30.73px;color:#111;-webkit-text-stroke:0.9px #111;transform:scaleX(1.0277)">P12</div>
<div class="t" style="left:2998.94px;top:759.03px;font-size:36.59px;color:#333;transform:scaleX(1.0204)">Karch Moeller</div>
<div class="t" style="left:4127.05px;top:761.99px;font-size:30.73px;color:#111;-webkit-text-stroke:0.9px #111;transform:scaleX(1.0277)">+2</div>
<div class="t" style="left:4042.02px;top:761.99px;font-size:30.73px;color:#111;-webkit-text-stroke:0.9px #111;transform:scaleX(1.0277)">P5</div>
<div class="t" style="left:3804.08px;top:759.03px;font-size:36.59px;color:#333;transform:scaleX(0.9240)">5,53 EUR</div>
<div class="t" style="left:2031.55px;top:865.49px;font-size:30.73px;color:#111;-webkit-text-stroke:0.9px #111;transform:scaleX(1.0277)">+2</div>
<div class="t" style="left:1928.44px;top:865.49px;font-size:30.73px;color:#111;-webkit-text-stroke:0.9px #111;transform:scaleX(1.0277)">P19</div>
<div class="t" style="left:1397.92px;top:862.53px;font-size:36.59px;color:#333;transform:scaleX(0.9793)">G826-1197003 - Heisenberg …</div>
<div class="t" style="left:2819.05px;top:865.49px;font-size:30.73px;color:#111;-webkit-text-stroke:0.9px #111;transform:scaleX(1.0277)">+2</div>
<div class="t" style="left:2715.94px;top:865.49px;font-size:30.73px;color:#111;-webkit-text-stroke:0.9px #111;transform:scaleX(1.0277)">P18</div>
<div class="t" style="left:2200.00px;top:862.53px;font-size:36.59px;color:#333;transform:scaleX(0.9913)">V178-8820348 - LCD Inductor</div>
<div class="t" style="left:3492.05px;top:865.49px;font-size:30.73px;color:#111;-webkit-text-stroke:0.9px #111;transform:scaleX(1.0277)">+2</div>
<div class="t" style="left:3388.43px;top:865.49px;font-size:30.73px;color:#111;-webkit-text-stroke:0.9px #111;transform:scaleX(1.0277)">P14</div>
<div class="t" style="left:3002.00px;top:862.53px;font-size:36.59px;color:#333">Anamchara Foerstner</div>
<div class="t" style="left:4127.05px;top:865.49px;font-size:30.73px;color:#111;-webkit-text-stroke:0.9px #111;transform:scaleX(1.0277)">+2</div>
<div class="t" style="left:4042.02px;top:865.49px;font-size:30.73px;color:#111;-webkit-text-stroke:0.9px #111;transform:scaleX(1.0277)">P5</div>
<div class="t" style="left:3804.08px;top:862.53px;font-size:36.59px;color:#333;transform:scaleX(0.9240)">0,44 EUR</div>
<div class="t" style="left:2031.55px;top:968.99px;font-size:30.73px;color:#111;-webkit-text-stroke:0.9px #111;transform:scaleX(1.0277)">+2</div>
<div class="t" style="left:1928.44px;top:968.99px;font-size:30.73px;color:#111;-webkit-text-stroke:0.9px #111;transform:scaleX(1.0277)">P19</div>
<div class="t" style="left:1397.92px;top:966.03px;font-size:36.59px;color:#333;transform:scaleX(0.9793)">G826-1197003 - Heisenberg …</div>
<div class="t" style="left:2833.05px;top:968.99px;font-size:30.73px;color:#111;-webkit-text-stroke:0.9px #111;transform:scaleX(1.0277)">+2</div>
<div class="t" style="left:2729.94px;top:968.99px;font-size:30.73px;color:#111;-webkit-text-stroke:0.9px #111;transform:scaleX(1.0277)">P19</div>
<div class="t" style="left:2197.03px;top:966.03px;font-size:36.59px;color:#333;transform:scaleX(0.9894)">F388-7030185 - Oscillator Tr…</div>
<div class="t" style="left:3492.05px;top:968.99px;font-size:30.73px;color:#111;-webkit-text-stroke:0.9px #111;transform:scaleX(1.0277)">+2</div>
<div class="t" style="left:3388.43px;top:968.99px;font-size:30.73px;color:#111;-webkit-text-stroke:0.9px #111;transform:scaleX(1.0277)">P14</div>
<div class="t" style="left:3002.00px;top:966.03px;font-size:36.59px;color:#333">Anamchara Foerstner</div>
<div class="t" style="left:4127.05px;top:968.99px;font-size:30.73px;color:#111;-webkit-text-stroke:0.9px #111;transform:scaleX(1.0277)">+2</div>
<div class="t" style="left:4042.02px;top:968.99px;font-size:30.73px;color:#111;-webkit-text-stroke:0.9px #111;transform:scaleX(1.0277)">P5</div>
<div class="t" style="left:3804.08px;top:966.03px;font-size:36.59px;color:#333;transform:scaleX(0.9240)">0,44 EUR</div>
<div class="t" style="left:2031.55px;top:1072.49px;font-size:30.73px;color:#111;-webkit-text-stroke:0.9px #111;transform:scaleX(1.0277)">+2</div>
<div class="t" style="left:1928.44px;top:1072.49px;font-size:30.73px;color:#111;-webkit-text-stroke:0.9px #111;transform:scaleX(1.0277)">P19</div>
<div class="t" style="left:1397.92px;top:1069.53px;font-size:36.59px;color:#333;transform:scaleX(0.9793)">G826-1197003 - Heisenberg …</div>
<div class="t" style="left:2833.05px;top:1072.49px;font-size:30.73px;color:#111;-webkit-text-stroke:0.9px #111;transform:scaleX(1.0277)">+2</div>
<div class="t" style="left:2729.94px;top:1072.49px;font-size:30.73px;color:#111;-webkit-text-stroke:0.9px #111;transform:scaleX(1.0277)">P20</div>
<div class="t" style="left:2197.05px;top:1069.53px;font-size:36.59px;color:#333;transform:scaleX(0.9844)">I892-8435352 - Heisenberg L…</div>
<div class="t" style="left:3492.05px;top:1072.49px;font-size:30.73px;color:#111;-webkit-text-stroke:0.9px #111;transform:scaleX(1.0277)">+2</div>
<div class="t" style="left:3388.43px;top:1072.49px;font-size:30.73px;color:#111;-webkit-text-stroke:0.9px #111;transform:scaleX(1.0277)">P14</div>
<div class="t" style="left:3002.00px;top:1069.53px;font-size:36.59px;color:#333">Anamchara Foerstner</div>
<div class="t" style="left:4127.05px;top:1072.49px;font-size:30.73px;color:#111;-webkit-text-stroke:0.9px #111;transform:scaleX(1.0277)">+2</div>
<div class="t" style="left:4042.02px;top:1072.49px;font-size:30.73px;color:#111;-webkit-text-stroke:0.9px #111;transform:scaleX(1.0277)">P5</div>
<div class="t" style="left:3804.08px;top:1069.53px;font-size:36.59px;color:#333;transform:scaleX(0.9240)">0,44 EUR</div>
<div class="t" style="left:2031.55px;top:1175.99px;font-size:30.73px;color:#111;-webkit-text-stroke:0.9px #111;transform:scaleX(1.0277)">+2</div>
<div class="t" style="left:1928.44px;top:1175.99px;font-size:30.73px;color:#111;-webkit-text-stroke:0.9px #111;transform:scaleX(1.0277)">P19</div>
<div class="t" style="left:1397.92px;top:1173.03px;font-size:36.59px;color:#333;transform:scaleX(0.9793)">G826-1197003 - Heisenberg …</div>
<div class="t" style="left:2833.05px;top:1175.99px;font-size:30.73px;color:#111;-webkit-text-stroke:0.9px #111;transform:scaleX(1.0277)">+2</div>
<div class="t" style="left:2729.94px;top:1175.99px;font-size:30.73px;color:#111;-webkit-text-stroke:0.9px #111;transform:scaleX(1.0277)">P21</div>
<div class="t" style="left:2200.00px;top:1173.03px;font-size:36.59px;color:#333;transform:scaleX(0.9854)">W726-4190110 - Ceramic M…</div>
<div class="t" style="left:3492.05px;top:1175.99px;font-size:30.73px;color:#111;-webkit-text-stroke:0.9px #111;transform:scaleX(1.0277)">+2</div>
<div class="t" style="left:3388.43px;top:1175.99px;font-size:30.73px;color:#111;-webkit-text-stroke:0.9px #111;transform:scaleX(1.0277)">P14</div>
<div class="t" style="left:3002.00px;top:1173.03px;font-size:36.59px;color:#333">Anamchara Foerstner</div>
<div class="t" style="left:4127.05px;top:1175.99px;font-size:30.73px;color:#111;-webkit-text-stroke:0.9px #111;transform:scaleX(1.0277)">+2</div>
<div class="t" style="left:4042.02px;top:1175.99px;font-size:30.73px;color:#111;-webkit-text-stroke:0.9px #111;transform:scaleX(1.0277)">P5</div>
<div class="t" style="left:3804.08px;top:1173.03px;font-size:36.59px;color:#333;transform:scaleX(0.9240)">0,44 EUR</div>
<div class="t" style="left:2031.55px;top:1279.49px;font-size:30.73px;color:#111;-webkit-text-stroke:0.9px #111;transform:scaleX(1.0277)">+2</div>
<div class="t" style="left:1928.44px;top:1279.49px;font-size:30.73px;color:#111;-webkit-text-stroke:0.9px #111;transform:scaleX(1.0277)">P17</div>
<div class="t" style="left:1395.95px;top:1276.53px;font-size:36.59px;color:#333;transform:scaleX(0.9822)">N560-4369045 - Resistor Co…</div>
<div class="t" style="left:2833.05px;top:1279.49px;font-size:30.73px;color:#111;-webkit-text-stroke:0.9px #111;transform:scaleX(1.0277)">+2</div>
<div class="t" style="left:2729.94px;top:1279.49px;font-size:30.73px;color:#111;-webkit-text-stroke:0.9px #111;transform:scaleX(1.0277)">P16</div>
<div class="t" style="left:2197.02px;top:1276.53px;font-size:36.59px;color:#333;transform:scaleX(0.9926)">I965-1821441 - Multiplexer R…</div>
<div class="t" style="left:3422.05px;top:1279.49px;font-size:30.73px;color:#111;-webkit-text-stroke:0.9px #111;transform:scaleX(1.0277)">+2</div>
<div class="t" style="left:3318.94px;top:1279.49px;font-size:30.73px;color:#111;-webkit-text-stroke:0.9px #111;transform:scaleX(1.0277)">P13</div>
<div class="t" style="left:2999.00px;top:1276.53px;font-size:36.59px;color:#333">Herr Burgh Eichel</div>
<div class="t" style="left:4127.05px;top:1279.49px;font-size:30.73px;color:#111;-webkit-text-stroke:0.9px #111;transform:scaleX(1.0277)">+2</div>
<div class="t" style="left:4042.02px;top:1279.49px;font-size:30.73px;color:#111;-webkit-text-stroke:0.9px #111;transform:scaleX(1.0277)">P5</div>
<div class="t" style="left:3804.08px;top:1276.53px;font-size:36.59px;color:#333;transform:scaleX(0.9240)">2,61 EUR</div>
<div class="t" style="left:2031.55px;top:1382.99px;font-size:30.73px;color:#111;-webkit-text-stroke:0.9px #111;transform:scaleX(1.0277)">+2</div>
<div class="t" style="left:1928.44px;top:1382.99px;font-size:30.73px;color:#111;-webkit-text-stroke:0.9px #111;transform:scaleX(1.0277)">P17</div>
<div class="t" style="left:1395.95px;top:1380.03px;font-size:36.59px;color:#333;transform:scaleX(0.9822)">N560-4369045 - Resistor Co…</div>
<div class="t" style="left:2833.05px;top:1382.99px;font-size:30.73px;color:#111;-webkit-text-stroke:0.9px #111;transform:scaleX(1.0277)">+2</div>
<div class="t" style="left:2729.94px;top:1382.99px;font-size:30.73px;color:#111;-webkit-text-stroke:0.9px #111;transform:scaleX(1.0277)">P17</div>
<div class="t" style="left:2199.03px;top:1380.03px;font-size:36.59px;color:#333;transform:scaleX(0.9746)">Q951-7651773 - Coil Compe…</div>
<div class="t" style="left:3422.05px;top:1382.99px;font-size:30.73px;color:#111;-webkit-text-stroke:0.9px #111;transform:scaleX(1.0277)">+2</div>
<div class="t" style="left:3318.94px;top:1382.99px;font-size:30.73px;color:#111;-webkit-text-stroke:0.9px #111;transform:scaleX(1.0277)">P13</div>
<div class="t" style="left:2999.00px;top:1380.03px;font-size:36.59px;color:#333">Herr Burgh Eichel</div>
<div class="t" style="left:4127.05px;top:1382.99px;font-size:30.73px;color:#111;-webkit-text-stroke:0.9px #111;transform:scaleX(1.0277)">+2</div>
<div class="t" style="left:4042.02px;top:1382.99px;font-size:30.73px;color:#111;-webkit-text-stroke:0.9px #111;transform:scaleX(1.0277)">P5</div>
<div class="t" style="left:3804.08px;top:1380.03px;font-size:36.59px;color:#333;transform:scaleX(0.9240)">2,61 EUR</div>
<div class="t" style="left:1325.54px;top:1475.40px;font-size:31.42px;color:#222;transform:scaleX(1.0277)">Items per page:</div>
<div class="t" style="left:1585.62px;top:1475.40px;font-size:31.42px;color:#222;transform:scaleX(1.0411)">10</div>
<div class="t" style="left:1741.70px;top:1475.40px;font-size:31.42px;color:#444;transform:scaleX(1.0509)">1–10 of 2139 items</div>
<div class="t" style="left:4014.70px;top:1475.40px;font-size:31.42px;color:#222">1</div>
<div class="t" style="left:4153.98px;top:1475.40px;font-size:31.42px;color:#222;transform:scaleX(1.0172)">of 214 pages</div>
<svg width="4579" height="1590" viewBox="0 0 4579 1590"><rect x="1346.4" y="450.09999999999997" width="33.2" height="33.2" rx="5" fill="none" stroke="#cc9e00" stroke-width="2.8"/><rect x="1352.4" y="456.09999999999997" width="21.2" height="21.2" rx="2.5" fill="none" stroke="#cc9e00" stroke-width="2.8"/><line x1="1356.5" y1="446.2" x2="1356.5" y2="449.7" stroke="#cc9e00" stroke-width="2.8" stroke-linecap="round"/><line x1="1356.5" y1="483.7" x2="1356.5" y2="487.2" stroke="#cc9e00" stroke-width="2.8" stroke-linecap="round"/><line x1="1342.5" y1="460.2" x2="1346" y2="460.2" stroke="#cc9e00" stroke-width="2.8" stroke-linecap="round"/><line x1="1380" y1="460.2" x2="1383.5" y2="460.2" stroke="#cc9e00" stroke-width="2.8" stroke-linecap="round"/><line x1="1363" y1="446.2" x2="1363" y2="449.7" stroke="#cc9e00" stroke-width="2.8" stroke-linecap="round"/><line x1="1363" y1="483.7" x2="1363" y2="487.2" stroke="#cc9e00" stroke-width="2.8" stroke-linecap="round"/><line x1="1342.5" y1="466.7" x2="1346" y2="466.7" stroke="#cc9e00" stroke-width="2.8" stroke-linecap="round"/><line x1="1380" y1="466.7" x2="1383.5" y2="466.7" stroke="#cc9e00" stroke-width="2.8" stroke-linecap="round"/><line x1="1370" y1="446.2" x2="1370" y2="449.7" stroke="#cc9e00" stroke-width="2.8" stroke-linecap="round"/><line x1="1370" y1="483.7" x2="1370" y2="487.2" stroke="#cc9e00" stroke-width="2.8" stroke-linecap="round"/><line x1="1342.5" y1="473.7" x2="1346" y2="473.7" stroke="#cc9e00" stroke-width="2.8" stroke-linecap="round"/><line x1="1380" y1="473.7" x2="1383.5" y2="473.7" stroke="#cc9e00" stroke-width="2.8" stroke-linecap="round"/><rect x="2149.4" y="450.09999999999997" width="33.2" height="33.2" rx="5" fill="none" stroke="#cc9e00" stroke-width="2.8"/><rect x="2155.4" y="456.09999999999997" width="21.2" height="21.2" rx="2.5" fill="none" stroke="#cc9e00" stroke-width="2.8"/><line x1="2159.5" y1="446.2" x2="2159.5" y2="449.7" stroke="#cc9e00" stroke-width="2.8" stroke-linecap="round"/><line x1="2159.5" y1="483.7" x2="2159.5" y2="487.2" stroke="#cc9e00" stroke-width="2.8" stroke-linecap="round"/><line x1="2145.5" y1="460.2" x2="2149" y2="460.2" stroke="#cc9e00" stroke-width="2.8" stroke-linecap="round"/><line x1="2183" y1="460.2" x2="2186.5" y2="460.2" stroke="#cc9e00" stroke-width="2.8" stroke-linecap="round"/><line x1="2166" y1="446.2" x2="2166" y2="449.7" stroke="#cc9e00" stroke-width="2.8" stroke-linecap="round"/><line x1="2166" y1="483.7" x2="2166" y2="487.2" stroke="#cc9e00" stroke-width="2.8" stroke-linecap="round"/><line x1="2145.5" y1="466.7" x2="2149" y2="466.7" stroke="#cc9e00" stroke-width="2.8" stroke-linecap="round"/><line x1="2183" y1="466.7" x2="2186.5" y2="466.7" stroke="#cc9e00" stroke-width="2.8" stroke-linecap="round"/><line x1="2173" y1="446.2" x2="2173" y2="449.7" stroke="#cc9e00" stroke-width="2.8" stroke-linecap="round"/><line x1="2173" y1="483.7" x2="2173" y2="487.2" stroke="#cc9e00" stroke-width="2.8" stroke-linecap="round"/><line x1="2145.5" y1="473.7" x2="2149" y2="473.7" stroke="#cc9e00" stroke-width="2.8" stroke-linecap="round"/><line x1="2183" y1="473.7" x2="2186.5" y2="473.7" stroke="#cc9e00" stroke-width="2.8" stroke-linecap="round"/><circle cx="2965.8" cy="455.7" r="8.1" fill="none" stroke="#cc9e00" stroke-width="2.6"/><path d="M2950.2,482.2 L2950.2,476.2 Q2950.2,468.7 2961,467.9 Q2967,467.2 2972,468.4" fill="none" stroke="#cc9e00" stroke-width="2.6" stroke-linecap="round"/><path d="M2977,473.7 L2967.8,473.7 L2967.8,485.9 L2987.3,485.9 L2987.3,473.7 L2982,473.7" fill="none" stroke="#cc9e00" stroke-width="2.6"/><line x1="2978" y1="468.7" x2="2978" y2="475.2" stroke="#cc9e00" stroke-width="2.6"/><line x1="2974.5" y1="480.0" x2="2981.5" y2="480.0" stroke="#cc9e00" stroke-width="2.3"/><path d="M3755.5,452.2 L3771.5,449.2 L3787.5,466.7 L3771,484.2 L3753,467.7Z" fill="#cc9e00" stroke="#cc9e00" stroke-width="6" stroke-linejoin="round"/><circle cx="3763" cy="460.3" r="3.9" fill="#fff"/><text x="0" y="0" transform="translate(3773.2,470.2) rotate(40)" font-family="Liberation Sans" font-weight="bold" font-size="19" fill="#fff" text-anchor="middle" dominant-baseline="central">$</text><rect x="1346.4" y="553.6" width="33.2" height="33.2" rx="5" fill="none" stroke="#cc9e00" stroke-width="2.8"/><rect x="1352.4" y="559.6" width="21.2" height="21.2" rx="2.5" fill="none" stroke="#cc9e00" stroke-width="2.8"/><line x1="1356.5" y1="549.7" x2="1356.5" y2="553.2" stroke="#cc9e00" stroke-width="2.8" stroke-linecap="round"/><line x1="1356.5" y1="587.2" x2="1356.5" y2="590.7" stroke="#cc9e00" stroke-width="2.8" stroke-linecap="round"/><line x1="1342.5" y1="563.7" x2="1346" y2="563.7" stroke="#cc9e00" stroke-width="2.8" stroke-linecap="round"/><line x1="1380" y1="563.7" x2="1383.5" y2="563.7" stroke="#cc9e00" stroke-width="2.8" stroke-linecap="round"/><line x1="1363" y1="549.7" x2="1363" y2="553.2" stroke="#cc9e00" stroke-width="2.8" stroke-linecap="round"/><line x1="1363" y1="587.2" x2="1363" y2="590.7" stroke="#cc9e00" stroke-width="2.8" stroke-linecap="round"/><line x1="1342.5" y1="570.2" x2="1346" y2="570.2" stroke="#cc9e00" stroke-width="2.8" stroke-linecap="round"/><line x1="1380" y1="570.2" x2="1383.5" y2="570.2" stroke="#cc9e00" stroke-width="2.8" stroke-linecap="round"/><line x1="1370" y1="549.7" x2="1370" y2="553.2" stroke="#cc9e00" stroke-width="2.8" stroke-linecap="round"/><line x1="1370" y1="587.2" x2="1370" y2="590.7" stroke="#cc9e00" stroke-width="2.8" stroke-linecap="round"/><line x1="1342.5" y1="577.2" x2="1346" y2="577.2" stroke="#cc9e00" stroke-width="2.8" stroke-linecap="round"/><line x1="1380" y1="577.2" x2="1383.5" y2="577.2" stroke="#cc9e00" stroke-width="2.8" stroke-linecap="round"/><rect x="2149.4" y="553.6" width="33.2" height="33.2" rx="5" fill="none" stroke="#cc9e00" stroke-width="2.8"/><rect x="2155.4" y="559.6" width="21.2" height="21.2" rx="2.5" fill="none" stroke="#cc9e00" stroke-width="2.8"/><line x1="2159.5" y1="549.7" x2="2159.5" y2="553.2" stroke="#cc9e00" stroke-width="2.8" stroke-linecap="round"/><line x1="2159.5" y1="587.2" x2="2159.5" y2="590.7" stroke="#cc9e00" stroke-width="2.8" stroke-linecap="round"/><line x1="2145.5" y1="563.7" x2="2149" y2="563.7" stroke="#cc9e00" stroke-width="2.8" stroke-linecap="round"/><line x1="2183" y1="563.7" x2="2186.5" y2="563.7" stroke="#cc9e00" stroke-width="2.8" stroke-linecap="round"/><line x1="2166" y1="549.7" x2="2166" y2="553.2" stroke="#cc9e00" stroke-width="2.8" stroke-linecap="round"/><line x1="2166" y1="587.2" x2="2166" y2="590.7" stroke="#cc9e00" stroke-width="2.8" stroke-linecap="round"/><line x1="2145.5" y1="570.2" x2="2149" y2="570.2" stroke="#cc9e00" stroke-width="2.8" stroke-linecap="round"/><line x1="2183" y1="570.2" x2="2186.5" y2="570.2" stroke="#cc9e00" stroke-width="2.8" stroke-linecap="round"/><line x1="2173" y1="549.7" x2="2173" y2="553.2" stroke="#cc9e00" stroke-width="2.8" stroke-linecap="round"/><line x1="2173" y1="587.2" x2="2173" y2="590.7" stroke="#cc9e00" stroke-width="2.8" stroke-linecap="round"/><line x1="2145.5" y1="577.2" x2="2149" y2="577.2" stroke="#cc9e00" stroke-width="2.8" stroke-linecap="round"/><line x1="2183" y1="577.2" x2="2186.5" y2="577.2" stroke="#cc9e00" stroke-width="2.8" stroke-linecap="round"/><circle cx="2965.8" cy="559.2" r="8.1" fill="none" stroke="#cc9e00" stroke-width="2.6"/><path d="M2950.2,585.7 L2950.2,579.7 Q2950.2,572.2 2961,571.4000000000001 Q2967,570.7 2972,571.9000000000001" fill="none" stroke="#cc9e00" stroke-width="2.6" stroke-linecap="round"/><path d="M2977,577.2 L2967.8,577.2 L2967.8,589.4000000000001 L2987.3,589.4000000000001 L2987.3,577.2 L2982,577.2" fill="none" stroke="#cc9e00" stroke-width="2.6"/><line x1="2978" y1="572.2" x2="2978" y2="578.7" stroke="#cc9e00" stroke-width="2.6"/><line x1="2974.5" y1="583.5" x2="2981.5" y2="583.5" stroke="#cc9e00" stroke-width="2.3"/><path d="M3755.5,555.7 L3771.5,552.7 L3787.5,570.2 L3771,587.7 L3753,571.2Z" fill="#cc9e00" stroke="#cc9e00" stroke-width="6" stroke-linejoin="round"/><circle cx="3763" cy="563.8000000000001" r="3.9" fill="#fff"/><text x="0" y="0" transform="translate(3773.2,573.7) rotate(40)" font-family="Liberation Sans" font-weight="bold" font-size="19" fill="#fff" text-anchor="middle" dominant-baseline="central">$</text><rect x="1346.4" y="657.1" width="33.2" height="33.2" rx="5" fill="none" stroke="#cc9e00" stroke-width="2.8"/><rect x="1352.4" y="663.1" width="21.2" height="21.2" rx="2.5" fill="none" stroke="#cc9e00" stroke-width="2.8"/><line x1="1356.5" y1="653.2" x2="1356.5" y2="656.7" stroke="#cc9e00" stroke-width="2.8" stroke-linecap="round"/><line x1="1356.5" y1="690.7" x2="1356.5" y2="694.2" stroke="#cc9e00" stroke-width="2.8" stroke-linecap="round"/><line x1="1342.5" y1="667.2" x2="1346" y2="667.2" stroke="#cc9e00" stroke-width="2.8" stroke-linecap="round"/><line x1="1380" y1="667.2" x2="1383.5" y2="667.2" stroke="#cc9e00" stroke-width="2.8" stroke-linecap="round"/><line x1="1363" y1="653.2" x2="1363" y2="656.7" stroke="#cc9e00" stroke-width="2.8" stroke-linecap="round"/><line x1="1363" y1="690.7" x2="1363" y2="694.2" stroke="#cc9e00" stroke-width="2.8" stroke-linecap="round"/><line x1="1342.5" y1="673.7" x2="1346" y2="673.7" stroke="#cc9e00" stroke-width="2.8" stroke-linecap="round"/><line x1="1380" y1="673.7" x2="1383.5" y2="673.7" stroke="#cc9e00" stroke-width="2.8" stroke-linecap="round"/><line x1="1370" y1="653.2" x2="1370" y2="656.7" stroke="#cc9e00" stroke-width="2.8" stroke-linecap="round"/><line x1="1370" y1="690.7" x2="1370" y2="694.2" stroke="#cc9e00" stroke-width="2.8" stroke-linecap="round"/><line x1="1342.5" y1="680.7" x2="1346" y2="680.7" stroke="#cc9e00" stroke-width="2.8" stroke-linecap="round"/><line x1="1380" y1="680.7" x2="1383.5" y2="680.7" stroke="#cc9e00" stroke-width="2.8" stroke-linecap="round"/><rect x="2149.4" y="657.1" width="33.2" height="33.2" rx="5" fill="none" stroke="#cc9e00" stroke-width="2.8"/><rect x="2155.4" y="663.1" width="21.2" height="21.2" rx="2.5" fill="none" stroke="#cc9e00" stroke-width="2.8"/><line x1="2159.5" y1="653.2" x2="2159.5" y2="656.7" stroke="#cc9e00" stroke-width="2.8" stroke-linecap="round"/><line x1="2159.5" y1="690.7" x2="2159.5" y2="694.2" stroke="#cc9e00" stroke-width="2.8" stroke-linecap="round"/><line x1="2145.5" y1="667.2" x2="2149" y2="667.2" stroke="#cc9e00" stroke-width="2.8" stroke-linecap="round"/><line x1="2183" y1="667.2" x2="2186.5" y2="667.2" stroke="#cc9e00" stroke-width="2.8" stroke-linecap="round"/><line x1="2166" y1="653.2" x2="2166" y2="656.7" stroke="#cc9e00" stroke-width="2.8" stroke-linecap="round"/><line x1="2166" y1="690.7" x2="2166" y2="694.2" stroke="#cc9e00" stroke-width="2.8" stroke-linecap="round"/><line x1="2145.5" y1="673.7" x2="2149" y2="673.7" stroke="#cc9e00" stroke-width="2.8" stroke-linecap="round"/><line x1="2183" y1="673.7" x2="2186.5" y2="673.7" stroke="#cc9e00" stroke-width="2.8" stroke-linecap="round"/><line x1="2173" y1="653.2" x2="2173" y2="656.7" stroke="#cc9e00" stroke-width="2.8" stroke-linecap="round"/><line x1="2173" y1="690.7" x2="2173" y2="694.2" stroke="#cc9e00" stroke-width="2.8" stroke-linecap="round"/><line x1="2145.5" y1="680.7" x2="2149" y2="680.7" stroke="#cc9e00" stroke-width="2.8" stroke-linecap="round"/><line x1="2183" y1="680.7" x2="2186.5" y2="680.7" stroke="#cc9e00" stroke-width="2.8" stroke-linecap="round"/><circle cx="2965.8" cy="662.7" r="8.1" fill="none" stroke="#cc9e00" stroke-width="2.6"/><path d="M2950.2,689.2 L2950.2,683.2 Q2950.2,675.7 2961,674.9000000000001 Q2967,674.2 2972,675.4000000000001" fill="none" stroke="#cc9e00" stroke-width="2.6" stroke-linecap="round"/><path d="M2977,680.7 L2967.8,680.7 L2967.8,692.9000000000001 L2987.3,692.9000000000001 L2987.3,680.7 L2982,680.7" fill="none" stroke="#cc9e00" stroke-width="2.6"/><line x1="2978" y1="675.7" x2="2978" y2="682.2" stroke="#cc9e00" stroke-width="2.6"/><line x1="2974.5" y1="687.0" x2="2981.5" y2="687.0" stroke="#cc9e00" stroke-width="2.3"/><path d="M3755.5,659.2 L3771.5,656.2 L3787.5,673.7 L3771,691.2 L3753,674.7Z" fill="#cc9e00" stroke="#cc9e00" stroke-width="6" stroke-linejoin="round"/><circle cx="3763" cy="667.3000000000001" r="3.9" fill="#fff"/><text x="0" y="0" transform="translate(3773.2,677.2) rotate(40)" font-family="Liberation Sans" font-weight="bold" font-size="19" fill="#fff" text-anchor="middle" dominant-baseline="central">$</text><rect x="1346.4" y="760.6" width="33.2" height="33.2" rx="5" fill="none" stroke="#cc9e00" stroke-width="2.8"/><rect x="1352.4" y="766.6" width="21.2" height="21.2" rx="2.5" fill="none" stroke="#cc9e00" stroke-width="2.8"/><line x1="1356.5" y1="756.7" x2="1356.5" y2="760.2" stroke="#cc9e00" stroke-width="2.8" stroke-linecap="round"/><line x1="1356.5" y1="794.2" x2="1356.5" y2="797.7" stroke="#cc9e00" stroke-width="2.8" stroke-linecap="round"/><line x1="1342.5" y1="770.7" x2="1346" y2="770.7" stroke="#cc9e00" stroke-width="2.8" stroke-linecap="round"/><line x1="1380" y1="770.7" x2="1383.5" y2="770.7" stroke="#cc9e00" stroke-width="2.8" stroke-linecap="round"/><line x1="1363" y1="756.7" x2="1363" y2="760.2" stroke="#cc9e00" stroke-width="2.8" stroke-linecap="round"/><line x1="1363" y1="794.2" x2="1363" y2="797.7" stroke="#cc9e00" stroke-width="2.8" stroke-linecap="round"/><line x1="1342.5" y1="777.2" x2="1346" y2="777.2" stroke="#cc9e00" stroke-width="2.8" stroke-linecap="round"/><line x1="1380" y1="777.2" x2="1383.5" y2="777.2" stroke="#cc9e00" stroke-width="2.8" stroke-linecap="round"/><line x1="1370" y1="756.7" x2="1370" y2="760.2" stroke="#cc9e00" stroke-width="2.8" stroke-linecap="round"/><line x1="1370" y1="794.2" x2="1370" y2="797.7" stroke="#cc9e00" stroke-width="2.8" stroke-linecap="round"/><line x1="1342.5" y1="784.2" x2="1346" y2="784.2" stroke="#cc9e00" stroke-width="2.8" stroke-linecap="round"/><line x1="1380" y1="784.2" x2="1383.5" y2="784.2" stroke="#cc9e00" stroke-width="2.8" stroke-linecap="round"/><circle cx="2965.8" cy="766.2" r="8.1" fill="none" stroke="#cc9e00" stroke-width="2.6"/><path d="M2950.2,792.7 L2950.2,786.7 Q2950.2,779.2 2961,778.4000000000001 Q2967,777.7 2972,778.9000000000001" fill="none" stroke="#cc9e00" stroke-width="2.6" stroke-linecap="round"/><path d="M2977,784.2 L2967.8,784.2 L2967.8,796.4000000000001 L2987.3,796.4000000000001 L2987.3,784.2 L2982,784.2" fill="none" stroke="#cc9e00" stroke-width="2.6"/><line x1="2978" y1="779.2" x2="2978" y2="785.7" stroke="#cc9e00" stroke-width="2.6"/><line x1="2974.5" y1="790.5" x2="2981.5" y2="790.5" stroke="#cc9e00" stroke-width="2.3"/><path d="M3755.5,762.7 L3771.5,759.7 L3787.5,777.2 L3771,794.7 L3753,778.2Z" fill="#cc9e00" stroke="#cc9e00" stroke-width="6" stroke-linejoin="round"/><circle cx="3763" cy="770.8000000000001" r="3.9" fill="#fff"/><text x="0" y="0" transform="translate(3773.2,780.7) rotate(40)" font-family="Liberation Sans" font-weight="bold" font-size="19" fill="#fff" text-anchor="middle" dominant-baseline="central">$</text><rect x="1346.4" y="864.1" width="33.2" height="33.2" rx="5" fill="none" stroke="#cc9e00" stroke-width="2.8"/><rect x="1352.4" y="870.1" width="21.2" height="21.2" rx="2.5" fill="none" stroke="#cc9e00" stroke-width="2.8"/><line x1="1356.5" y1="860.2" x2="1356.5" y2="863.7" stroke="#cc9e00" stroke-width="2.8" stroke-linecap="round"/><line x1="1356.5" y1="897.7" x2="1356.5" y2="901.2" stroke="#cc9e00" stroke-width="2.8" stroke-linecap="round"/><line x1="1342.5" y1="874.2" x2="1346" y2="874.2" stroke="#cc9e00" stroke-width="2.8" stroke-linecap="round"/><line x1="1380" y1="874.2" x2="1383.5" y2="874.2" stroke="#cc9e00" stroke-width="2.8" stroke-linecap="round"/><line x1="1363" y1="860.2" x2="1363" y2="863.7" stroke="#cc9e00" stroke-width="2.8" stroke-linecap="round"/><line x1="1363" y1="897.7" x2="1363" y2="901.2" stroke="#cc9e00" stroke-width="2.8" stroke-linecap="round"/><line x1="1342.5" y1="880.7" x2="1346" y2="880.7" stroke="#cc9e00" stroke-width="2.8" stroke-linecap="round"/><line x1="1380" y1="880.7" x2="1383.5" y2="880.7" stroke="#cc9e00" stroke-width="2.8" stroke-linecap="round"/><line x1="1370" y1="860.2" x2="1370" y2="863.7" stroke="#cc9e00" stroke-width="2.8" stroke-linecap="round"/><line x1="1370" y1="897.7" x2="1370" y2="901.2" stroke="#cc9e00" stroke-width="2.8" stroke-linecap="round"/><line x1="1342.5" y1="887.7" x2="1346" y2="887.7" stroke="#cc9e00" stroke-width="2.8" stroke-linecap="round"/><line x1="1380" y1="887.7" x2="1383.5" y2="887.7" stroke="#cc9e00" stroke-width="2.8" stroke-linecap="round"/><rect x="2149.4" y="864.1" width="33.2" height="33.2" rx="5" fill="none" stroke="#cc9e00" stroke-width="2.8"/><rect x="2155.4" y="870.1" width="21.2" height="21.2" rx="2.5" fill="none" stroke="#cc9e00" stroke-width="2.8"/><line x1="2159.5" y1="860.2" x2="2159.5" y2="863.7" stroke="#cc9e00" stroke-width="2.8" stroke-linecap="round"/><line x1="2159.5" y1="897.7" x2="2159.5" y2="901.2" stroke="#cc9e00" stroke-width="2.8" stroke-linecap="round"/><line x1="2145.5" y1="874.2" x2="2149" y2="874.2" stroke="#cc9e00" stroke-width="2.8" stroke-linecap="round"/><line x1="2183" y1="874.2" x2="2186.5" y2="874.2" stroke="#cc9e00" stroke-width="2.8" stroke-linecap="round"/><line x1="2166" y1="860.2" x2="2166" y2="863.7" stroke="#cc9e00" stroke-width="2.8" stroke-linecap="round"/><line x1="2166" y1="897.7" x2="2166" y2="901.2" stroke="#cc9e00" stroke-width="2.8" stroke-linecap="round"/><line x1="2145.5" y1="880.7" x2="2149" y2="880.7" stroke="#cc9e00" stroke-width="2.8" stroke-linecap="round"/><line x1="2183" y1="880.7" x2="2186.5" y2="880.7" stroke="#cc9e00" stroke-width="2.8" stroke-linecap="round"/><line x1="2173" y1="860.2" x2="2173" y2="863.7" stroke="#cc9e00" stroke-width="2.8" stroke-linecap="round"/><line x1="2173" y1="897.7" x2="2173" y2="901.2" stroke="#cc9e00" stroke-width="2.8" stroke-linecap="round"/><line x1="2145.5" y1="887.7" x2="2149" y2="887.7" stroke="#cc9e00" stroke-width="2.8" stroke-linecap="round"/><line x1="2183" y1="887.7" x2="2186.5" y2="887.7" stroke="#cc9e00" stroke-width="2.8" stroke-linecap="round"/><circle cx="2965.8" cy="869.7" r="8.1" fill="none" stroke="#cc9e00" stroke-width="2.6"/><path d="M2950.2,896.2 L2950.2,890.2 Q2950.2,882.7 2961,881.9000000000001 Q2967,881.2 2972,882.4000000000001" fill="none" stroke="#cc9e00" stroke-width="2.6" stroke-linecap="round"/><path d="M2977,887.7 L2967.8,887.7 L2967.8,899.9000000000001 L2987.3,899.9000000000001 L2987.3,887.7 L2982,887.7" fill="none" stroke="#cc9e00" stroke-width="2.6"/><line x1="2978" y1="882.7" x2="2978" y2="889.2" stroke="#cc9e00" stroke-width="2.6"/><line x1="2974.5" y1="894.0" x2="2981.5" y2="894.0" stroke="#cc9e00" stroke-width="2.3"/><path d="M3755.5,866.2 L3771.5,863.2 L3787.5,880.7 L3771,898.2 L3753,881.7Z" fill="#cc9e00" stroke="#cc9e00" stroke-width="6" stroke-linejoin="round"/><circle cx="3763" cy="874.3000000000001" r="3.9" fill="#fff"/><text x="0" y="0" transform="translate(3773.2,884.2) rotate(40)" font-family="Liberation Sans" font-weight="bold" font-size="19" fill="#fff" text-anchor="middle" dominant-baseline="central">$</text><rect x="1346.4" y="967.6" width="33.2" height="33.2" rx="5" fill="none" stroke="#cc9e00" stroke-width="2.8"/><rect x="1352.4" y="973.6" width="21.2" height="21.2" rx="2.5" fill="none" stroke="#cc9e00" stroke-width="2.8"/><line x1="1356.5" y1="963.7" x2="1356.5" y2="967.2" stroke="#cc9e00" stroke-width="2.8" stroke-linecap="round"/><line x1="1356.5" y1="1001.2" x2="1356.5" y2="1004.7" stroke="#cc9e00" stroke-width="2.8" stroke-linecap="round"/><line x1="1342.5" y1="977.7" x2="1346" y2="977.7" stroke="#cc9e00" stroke-width="2.8" stroke-linecap="round"/><line x1="1380" y1="977.7" x2="1383.5" y2="977.7" stroke="#cc9e00" stroke-width="2.8" stroke-linecap="round"/><line x1="1363" y1="963.7" x2="1363" y2="967.2" stroke="#cc9e00" stroke-width="2.8" stroke-linecap="round"/><line x1="1363" y1="1001.2" x2="1363" y2="1004.7" stroke="#cc9e00" stroke-width="2.8" stroke-linecap="round"/><line x1="1342.5" y1="984.2" x2="1346" y2="984.2" stroke="#cc9e00" stroke-width="2.8" stroke-linecap="round"/><line x1="1380" y1="984.2" x2="1383.5" y2="984.2" stroke="#cc9e00" stroke-width="2.8" stroke-linecap="round"/><line x1="1370" y1="963.7" x2="1370" y2="967.2" stroke="#cc9e00" stroke-width="2.8" stroke-linecap="round"/><line x1="1370" y1="1001.2" x2="1370" y2="1004.7" stroke="#cc9e00" stroke-width="2.8" stroke-linecap="round"/><line x1="1342.5" y1="991.2" x2="1346" y2="991.2" stroke="#cc9e00" stroke-width="2.8" stroke-linecap="round"/><line x1="1380" y1="991.2" x2="1383.5" y2="991.2" stroke="#cc9e00" stroke-width="2.8" stroke-linecap="round"/><rect x="2149.4" y="967.6" width="33.2" height="33.2" rx="5" fill="none" stroke="#cc9e00" stroke-width="2.8"/><rect x="2155.4" y="973.6" width="21.2" height="21.2" rx="2.5" fill="none" stroke="#cc9e00" stroke-width="2.8"/><line x1="2159.5" y1="963.7" x2="2159.5" y2="967.2" stroke="#cc9e00" stroke-width="2.8" stroke-linecap="round"/><line x1="2159.5" y1="1001.2" x2="2159.5" y2="1004.7" stroke="#cc9e00" stroke-width="2.8" stroke-linecap="round"/><line x1="2145.5" y1="977.7" x2="2149" y2="977.7" stroke="#cc9e00" stroke-width="2.8" stroke-linecap="round"/><line x1="2183" y1="977.7" x2="2186.5" y2="977.7" stroke="#cc9e00" stroke-width="2.8" stroke-linecap="round"/><line x1="2166" y1="963.7" x2="2166" y2="967.2" stroke="#cc9e00" stroke-width="2.8" stroke-linecap="round"/><line x1="2166" y1="1001.2" x2="2166" y2="1004.7" stroke="#cc9e00" stroke-width="2.8" stroke-linecap="round"/><line x1="2145.5" y1="984.2" x2="2149" y2="984.2" stroke="#cc9e00" stroke-width="2.8" stroke-linecap="round"/><line x1="2183" y1="984.2" x2="2186.5" y2="984.2" stroke="#cc9e00" stroke-width="2.8" stroke-linecap="round"/><line x1="2173" y1="963.7" x2="2173" y2="967.2" stroke="#cc9e00" stroke-width="2.8" stroke-linecap="round"/><line x1="2173" y1="1001.2" x2="2173" y2="1004.7" stroke="#cc9e00" stroke-width="2.8" stroke-linecap="round"/><line x1="2145.5" y1="991.2" x2="2149" y2="991.2" stroke="#cc9e00" stroke-width="2.8" stroke-linecap="round"/><line x1="2183" y1="991.2" x2="2186.5" y2="991.2" stroke="#cc9e00" stroke-width="2.8" stroke-linecap="round"/><circle cx="2965.8" cy="973.2" r="8.1" fill="none" stroke="#cc9e00" stroke-width="2.6"/><path d="M2950.2,999.7 L2950.2,993.7 Q2950.2,986.2 2961,985.4000000000001 Q2967,984.7 2972,985.9000000000001" fill="none" stroke="#cc9e00" stroke-width="2.6" stroke-linecap="round"/><path d="M2977,991.2 L2967.8,991.2 L2967.8,1003.4000000000001 L2987.3,1003.4000000000001 L2987.3,991.2 L2982,991.2" fill="none" stroke="#cc9e00" stroke-width="2.6"/><line x1="2978" y1="986.2" x2="2978" y2="992.7" stroke="#cc9e00" stroke-width="2.6"/><line x1="2974.5" y1="997.5" x2="2981.5" y2="997.5" stroke="#cc9e00" stroke-width="2.3"/><path d="M3755.5,969.7 L3771.5,966.7 L3787.5,984.2 L3771,1001.7 L3753,985.2Z" fill="#cc9e00" stroke="#cc9e00" stroke-width="6" stroke-linejoin="round"/><circle cx="3763" cy="977.8000000000001" r="3.9" fill="#fff"/><text x="0" y="0" transform="translate(3773.2,987.7) rotate(40)" font-family="Liberation Sans" font-weight="bold" font-size="19" fill="#fff" text-anchor="middle" dominant-baseline="central">$</text><rect x="1346.4" y="1071.1000000000001" width="33.2" height="33.2" rx="5" fill="none" stroke="#cc9e00" stroke-width="2.8"/><rect x="1352.4" y="1077.1000000000001" width="21.2" height="21.2" rx="2.5" fill="none" stroke="#cc9e00" stroke-width="2.8"/><line x1="1356.5" y1="1067.2" x2="1356.5" y2="1070.7" stroke="#cc9e00" stroke-width="2.8" stroke-linecap="round"/><line x1="1356.5" y1="1104.7" x2="1356.5" y2="1108.2" stroke="#cc9e00" stroke-width="2.8" stroke-linecap="round"/><line x1="1342.5" y1="1081.2" x2="1346" y2="1081.2" stroke="#cc9e00" stroke-width="2.8" stroke-linecap="round"/><line x1="1380" y1="1081.2" x2="1383.5" y2="1081.2" stroke="#cc9e00" stroke-width="2.8" stroke-linecap="round"/><line x1="1363" y1="1067.2" x2="1363" y2="1070.7" stroke="#cc9e00" stroke-width="2.8" stroke-linecap="round"/><line x1="1363" y1="1104.7" x2="1363" y2="1108.2" stroke="#cc9e00" stroke-width="2.8" stroke-linecap="round"/><line x1="1342.5" y1="1087.7" x2="1346" y2="1087.7" stroke="#cc9e00" stroke-width="2.8" stroke-linecap="round"/><line x1="1380" y1="1087.7" x2="1383.5" y2="1087.7" stroke="#cc9e00" stroke-width="2.8" stroke-linecap="round"/><line x1="1370" y1="1067.2" x2="1370" y2="1070.7" stroke="#cc9e00" stroke-width="2.8" stroke-linecap="round"/><line x1="1370" y1="1104.7" x2="1370" y2="1108.2" stroke="#cc9e00" stroke-width="2.8" stroke-linecap="round"/><line x1="1342.5" y1="1094.7" x2="1346" y2="1094.7" stroke="#cc9e00" stroke-width="2.8" stroke-linecap="round"/><line x1="1380" y1="1094.7" x2="1383.5" y2="1094.7" stroke="#cc9e00" stroke-width="2.8" stroke-linecap="round"/><rect x="2149.4" y="1071.1000000000001" width="33.2" height="33.2" rx="5" fill="none" stroke="#cc9e00" stroke-width="2.8"/><rect x="2155.4" y="1077.1000000000001" width="21.2" height="21.2" rx="2.5" fill="none" stroke="#cc9e00" stroke-width="2.8"/><line x1="2159.5" y1="1067.2" x2="2159.5" y2="1070.7" stroke="#cc9e00" stroke-width="2.8" stroke-linecap="round"/><line x1="2159.5" y1="1104.7" x2="2159.5" y2="1108.2" stroke="#cc9e00" stroke-width="2.8" stroke-linecap="round"/><line x1="2145.5" y1="1081.2" x2="2149" y2="1081.2" stroke="#cc9e00" stroke-width="2.8" stroke-linecap="round"/><line x1="2183" y1="1081.2" x2="2186.5" y2="1081.2" stroke="#cc9e00" stroke-width="2.8" stroke-linecap="round"/><line x1="2166" y1="1067.2" x2="2166" y2="1070.7" stroke="#cc9e00" stroke-width="2.8" stroke-linecap="round"/><line x1="2166" y1="1104.7" x2="2166" y2="1108.2" stroke="#cc9e00" stroke-width="2.8" stroke-linecap="round"/><line x1="2145.5" y1="1087.7" x2="2149" y2="1087.7" stroke="#cc9e00" stroke-width="2.8" stroke-linecap="round"/><line x1="2183" y1="1087.7" x2="2186.5" y2="1087.7" stroke="#cc9e00" stroke-width="2.8" stroke-linecap="round"/><line x1="2173" y1="1067.2" x2="2173" y2="1070.7" stroke="#cc9e00" stroke-width="2.8" stroke-linecap="round"/><line x1="2173" y1="1104.7" x2="2173" y2="1108.2" stroke="#cc9e00" stroke-width="2.8" stroke-linecap="round"/><line x1="2145.5" y1="1094.7" x2="2149" y2="1094.7" stroke="#cc9e00" stroke-width="2.8" stroke-linecap="round"/><line x1="2183" y1="1094.7" x2="2186.5" y2="1094.7" stroke="#cc9e00" stroke-width="2.8" stroke-linecap="round"/><circle cx="2965.8" cy="1076.7" r="8.1" fill="none" stroke="#cc9e00" stroke-width="2.6"/><path d="M2950.2,1103.2 L2950.2,1097.2 Q2950.2,1089.7 2961,1088.9 Q2967,1088.2 2972,1089.4" fill="none" stroke="#cc9e00" stroke-width="2.6" stroke-linecap="round"/><path d="M2977,1094.7 L2967.8,1094.7 L2967.8,1106.9 L2987.3,1106.9 L2987.3,1094.7 L2982,1094.7" fill="none" stroke="#cc9e00" stroke-width="2.6"/><line x1="2978" y1="1089.7" x2="2978" y2="1096.2" stroke="#cc9e00" stroke-width="2.6"/><line x1="2974.5" y1="1101.0" x2="2981.5" y2="1101.0" stroke="#cc9e00" stroke-width="2.3"/><path d="M3755.5,1073.2 L3771.5,1070.2 L3787.5,1087.7 L3771,1105.2 L3753,1088.7Z" fill="#cc9e00" stroke="#cc9e00" stroke-width="6" stroke-linejoin="round"/><circle cx="3763" cy="1081.3" r="3.9" fill="#fff"/><text x="0" y="0" transform="translate(3773.2,1091.2) rotate(40)" font-family="Liberation Sans" font-weight="bold" font-size="19" fill="#fff" text-anchor="middle" dominant-baseline="central">$</text><rect x="1346.4" y="1174.6000000000001" width="33.2" height="33.2" rx="5" fill="none" stroke="#cc9e00" stroke-width="2.8"/><rect x="1352.4" y="1180.6000000000001" width="21.2" height="21.2" rx="2.5" fill="none" stroke="#cc9e00" stroke-width="2.8"/><line x1="1356.5" y1="1170.7" x2="1356.5" y2="1174.2" stroke="#cc9e00" stroke-width="2.8" stroke-linecap="round"/><line x1="1356.5" y1="1208.2" x2="1356.5" y2="1211.7" stroke="#cc9e00" stroke-width="2.8" stroke-linecap="round"/><line x1="1342.5" y1="1184.7" x2="1346" y2="1184.7" stroke="#cc9e00" stroke-width="2.8" stroke-linecap="round"/><line x1="1380" y1="1184.7" x2="1383.5" y2="1184.7" stroke="#cc9e00" stroke-width="2.8" stroke-linecap="round"/><line x1="1363" y1="1170.7" x2="1363" y2="1174.2" stroke="#cc9e00" stroke-width="2.8" stroke-linecap="round"/><line x1="1363" y1="1208.2" x2="1363" y2="1211.7" stroke="#cc9e00" stroke-width="2.8" stroke-linecap="round"/><line x1="1342.5" y1="1191.2" x2="1346" y2="1191.2" stroke="#cc9e00" stroke-width="2.8" stroke-linecap="round"/><line x1="1380" y1="1191.2" x2="1383.5" y2="1191.2" stroke="#cc9e00" stroke-width="2.8" stroke-linecap="round"/><line x1="1370" y1="1170.7" x2="1370" y2="1174.2" stroke="#cc9e00" stroke-width="2.8" stroke-linecap="round"/><line x1="1370" y1="1208.2" x2="1370" y2="1211.7" stroke="#cc9e00" stroke-width="2.8" stroke-linecap="round"/><line x1="1342.5" y1="1198.2" x2="1346" y2="1198.2" stroke="#cc9e00" stroke-width="2.8" stroke-linecap="round"/><line x1="1380" y1="1198.2" x2="1383.5" y2="1198.2" stroke="#cc9e00" stroke-width="2.8" stroke-linecap="round"/><rect x="2149.4" y="1174.6000000000001" width="33.2" height="33.2" rx="5" fill="none" stroke="#cc9e00" stroke-width="2.8"/><rect x="2155.4" y="1180.6000000000001" width="21.2" height="21.2" rx="2.5" fill="none" stroke="#cc9e00" stroke-width="2.8"/><line x1="2159.5" y1="1170.7" x2="2159.5" y2="1174.2" stroke="#cc9e00" stroke-width="2.8" stroke-linecap="round"/><line x1="2159.5" y1="1208.2" x2="2159.5" y2="1211.7" stroke="#cc9e00" stroke-width="2.8" stroke-linecap="round"/><line x1="2145.5" y1="1184.7" x2="2149" y2="1184.7" stroke="#cc9e00" stroke-width="2.8" stroke-linecap="round"/><line x1="2183" y1="1184.7" x2="2186.5" y2="1184.7" stroke="#cc9e00" stroke-width="2.8" stroke-linecap="round"/><line x1="2166" y1="1170.7" x2="2166" y2="1174.2" stroke="#cc9e00" stroke-width="2.8" stroke-linecap="round"/><line x1="2166" y1="1208.2" x2="2166" y2="1211.7" stroke="#cc9e00" stroke-width="2.8" stroke-linecap="round"/><line x1="2145.5" y1="1191.2" x2="2149" y2="1191.2" stroke="#cc9e00" stroke-width="2.8" stroke-linecap="round"/><line x1="2183" y1="1191.2" x2="2186.5" y2="1191.2" stroke="#cc9e00" stroke-width="2.8" stroke-linecap="round"/><line x1="2173" y1="1170.7" x2="2173" y2="1174.2" stroke="#cc9e00" stroke-width="2.8" stroke-linecap="round"/><line x1="2173" y1="1208.2" x2="2173" y2="1211.7" stroke="#cc9e00" stroke-width="2.8" stroke-linecap="round"/><line x1="2145.5" y1="1198.2" x2="2149" y2="1198.2" stroke="#cc9e00" stroke-width="2.8" stroke-linecap="round"/><line x1="2183" y1="1198.2" x2="2186.5" y2="1198.2" stroke="#cc9e00" stroke-width="2.8" stroke-linecap="round"/><circle cx="2965.8" cy="1180.2" r="8.1" fill="none" stroke="#cc9e00" stroke-width="2.6"/><path d="M2950.2,1206.7 L2950.2,1200.7 Q2950.2,1193.2 2961,1192.4 Q2967,1191.7 2972,1192.9" fill="none" stroke="#cc9e00" stroke-width="2.6" stroke-linecap="round"/><path d="M2977,1198.2 L2967.8,1198.2 L2967.8,1210.4 L2987.3,1210.4 L2987.3,1198.2 L2982,1198.2" fill="none" stroke="#cc9e00" stroke-width="2.6"/><line x1="2978" y1="1193.2" x2="2978" y2="1199.7" stroke="#cc9e00" stroke-width="2.6"/><line x1="2974.5" y1="1204.5" x2="2981.5" y2="1204.5" stroke="#cc9e00" stroke-width="2.3"/><path d="M3755.5,1176.7 L3771.5,1173.7 L3787.5,1191.2 L3771,1208.7 L3753,1192.2Z" fill="#cc9e00" stroke="#cc9e00" stroke-width="6" stroke-linejoin="round"/><circle cx="3763" cy="1184.8" r="3.9" fill="#fff"/><text x="0" y="0" transform="translate(3773.2,1194.7) rotate(40)" font-family="Liberation Sans" font-weight="bold" font-size="19" fill="#fff" text-anchor="middle" dominant-baseline="central">$</text><rect x="1346.4" y="1278.1000000000001" width="33.2" height="33.2" rx="5" fill="none" stroke="#cc9e00" stroke-width="2.8"/><rect x="1352.4" y="1284.1000000000001" width="21.2" height="21.2" rx="2.5" fill="none" stroke="#cc9e00" stroke-width="2.8"/><line x1="1356.5" y1="1274.2" x2="1356.5" y2="1277.7" stroke="#cc9e00" stroke-width="2.8" stroke-linecap="round"/><line x1="1356.5" y1="1311.7" x2="1356.5" y2="1315.2" stroke="#cc9e00" stroke-width="2.8" stroke-linecap="round"/><line x1="1342.5" y1="1288.2" x2="1346" y2="1288.2" stroke="#cc9e00" stroke-width="2.8" stroke-linecap="round"/><line x1="1380" y1="1288.2" x2="1383.5" y2="1288.2" stroke="#cc9e00" stroke-width="2.8" stroke-linecap="round"/><line x1="1363" y1="1274.2" x2="1363" y2="1277.7" stroke="#cc9e00" stroke-width="2.8" stroke-linecap="round"/><line x1="1363" y1="1311.7" x2="1363" y2="1315.2" stroke="#cc9e00" stroke-width="2.8" stroke-linecap="round"/><line x1="1342.5" y1="1294.7" x2="1346" y2="1294.7" stroke="#cc9e00" stroke-width="2.8" stroke-linecap="round"/><line x1="1380" y1="1294.7" x2="1383.5" y2="1294.7" stroke="#cc9e00" stroke-width="2.8" stroke-linecap="round"/><line x1="1370" y1="1274.2" x2="1370" y2="1277.7" stroke="#cc9e00" stroke-width="2.8" stroke-linecap="round"/><line x1="1370" y1="1311.7" x2="1370" y2="1315.2" stroke="#cc9e00" stroke-width="2.8" stroke-linecap="round"/><line x1="1342.5" y1="1301.7" x2="1346" y2="1301.7" stroke="#cc9e00" stroke-width="2.8" stroke-linecap="round"/><line x1="1380" y1="1301.7" x2="1383.5" y2="1301.7" stroke="#cc9e00" stroke-width="2.8" stroke-linecap="round"/><rect x="2149.4" y="1278.1000000000001" width="33.2" height="33.2" rx="5" fill="none" stroke="#cc9e00" stroke-width="2.8"/><rect x="2155.4" y="1284.1000000000001" width="21.2" height="21.2" rx="2.5" fill="none" stroke="#cc9e00" stroke-width="2.8"/><line x1="2159.5" y1="1274.2" x2="2159.5" y2="1277.7" stroke="#cc9e00" stroke-width="2.8" stroke-linecap="round"/><line x1="2159.5" y1="1311.7" x2="2159.5" y2="1315.2" stroke="#cc9e00" stroke-width="2.8" stroke-linecap="round"/><line x1="2145.5" y1="1288.2" x2="2149" y2="1288.2" stroke="#cc9e00" stroke-width="2.8" stroke-linecap="round"/><line x1="2183" y1="1288.2" x2="2186.5" y2="1288.2" stroke="#cc9e00" stroke-width="2.8" stroke-linecap="round"/><line x1="2166" y1="1274.2" x2="2166" y2="1277.7" stroke="#cc9e00" stroke-width="2.8" stroke-linecap="round"/><line x1="2166" y1="1311.7" x2="2166" y2="1315.2" stroke="#cc9e00" stroke-width="2.8" stroke-linecap="round"/><line x1="2145.5" y1="1294.7" x2="2149" y2="1294.7" stroke="#cc9e00" stroke-width="2.8" stroke-linecap="round"/><line x1="2183" y1="1294.7" x2="2186.5" y2="1294.7" stroke="#cc9e00" stroke-width="2.8" stroke-linecap="round"/><line x1="2173" y1="1274.2" x2="2173" y2="1277.7" stroke="#cc9e00" stroke-width="2.8" stroke-linecap="round"/><line x1="2173" y1="1311.7" x2="2173" y2="1315.2" stroke="#cc9e00" stroke-width="2.8" stroke-linecap="round"/><line x1="2145.5" y1="1301.7" x2="2149" y2="1301.7" stroke="#cc9e00" stroke-width="2.8" stroke-linecap="round"/><line x1="2183" y1="1301.7" x2="2186.5" y2="1301.7" stroke="#cc9e00" stroke-width="2.8" stroke-linecap="round"/><circle cx="2965.8" cy="1283.7" r="8.1" fill="none" stroke="#cc9e00" stroke-width="2.6"/><path d="M2950.2,1310.2 L2950.2,1304.2 Q2950.2,1296.7 2961,1295.9 Q2967,1295.2 2972,1296.4" fill="none" stroke="#cc9e00" stroke-width="2.6" stroke-linecap="round"/><path d="M2977,1301.7 L2967.8,1301.7 L2967.8,1313.9 L2987.3,1313.9 L2987.3,1301.7 L2982,1301.7" fill="none" stroke="#cc9e00" stroke-width="2.6"/><line x1="2978" y1="1296.7" x2="2978" y2="1303.2" stroke="#cc9e00" stroke-width="2.6"/><line x1="2974.5" y1="1308.0" x2="2981.5" y2="1308.0" stroke="#cc9e00" stroke-width="2.3"/><path d="M3755.5,1280.2 L3771.5,1277.2 L3787.5,1294.7 L3771,1312.2 L3753,1295.7Z" fill="#cc9e00" stroke="#cc9e00" stroke-width="6" stroke-linejoin="round"/><circle cx="3763" cy="1288.3" r="3.9" fill="#fff"/><text x="0" y="0" transform="translate(3773.2,1298.2) rotate(40)" font-family="Liberation Sans" font-weight="bold" font-size="19" fill="#fff" text-anchor="middle" dominant-baseline="central">$</text><rect x="1346.4" y="1381.6000000000001" width="33.2" height="33.2" rx="5" fill="none" stroke="#cc9e00" stroke-width="2.8"/><rect x="1352.4" y="1387.6000000000001" width="21.2" height="21.2" rx="2.5" fill="none" stroke="#cc9e00" stroke-width="2.8"/><line x1="1356.5" y1="1377.7" x2="1356.5" y2="1381.2" stroke="#cc9e00" stroke-width="2.8" stroke-linecap="round"/><line x1="1356.5" y1="1415.2" x2="1356.5" y2="1418.7" stroke="#cc9e00" stroke-width="2.8" stroke-linecap="round"/><line x1="1342.5" y1="1391.7" x2="1346" y2="1391.7" stroke="#cc9e00" stroke-width="2.8" stroke-linecap="round"/><line x1="1380" y1="1391.7" x2="1383.5" y2="1391.7" stroke="#cc9e00" stroke-width="2.8" stroke-linecap="round"/><line x1="1363" y1="1377.7" x2="1363" y2="1381.2" stroke="#cc9e00" stroke-width="2.8" stroke-linecap="round"/><line x1="1363" y1="1415.2" x2="1363" y2="1418.7" stroke="#cc9e00" stroke-width="2.8" stroke-linecap="round"/><line x1="1342.5" y1="1398.2" x2="1346" y2="1398.2" stroke="#cc9e00" stroke-width="2.8" stroke-linecap="round"/><line x1="1380" y1="1398.2" x2="1383.5" y2="1398.2" stroke="#cc9e00" stroke-width="2.8" stroke-linecap="round"/><line x1="1370" y1="1377.7" x2="1370" y2="1381.2" stroke="#cc9e00" stroke-width="2.8" stroke-linecap="round"/><line x1="1370" y1="1415.2" x2="1370" y2="1418.7" stroke="#cc9e00" stroke-width="2.8" stroke-linecap="round"/><line x1="1342.5" y1="1405.2" x2="1346" y2="1405.2" stroke="#cc9e00" stroke-width="2.8" stroke-linecap="round"/><line x1="1380" y1="1405.2" x2="1383.5" y2="1405.2" stroke="#cc9e00" stroke-width="2.8" stroke-linecap="round"/><rect x="2149.4" y="1381.6000000000001" width="33.2" height="33.2" rx="5" fill="none" stroke="#cc9e00" stroke-width="2.8"/><rect x="2155.4" y="1387.6000000000001" width="21.2" height="21.2" rx="2.5" fill="none" stroke="#cc9e00" stroke-width="2.8"/><line x1="2159.5" y1="1377.7" x2="2159.5" y2="1381.2" stroke="#cc9e00" stroke-width="2.8" stroke-linecap="round"/><line x1="2159.5" y1="1415.2" x2="2159.5" y2="1418.7" stroke="#cc9e00" stroke-width="2.8" stroke-linecap="round"/><line x1="2145.5" y1="1391.7" x2="2149" y2="1391.7" stroke="#cc9e00" stroke-width="2.8" stroke-linecap="round"/><line x1="2183" y1="1391.7" x2="2186.5" y2="1391.7" stroke="#cc9e00" stroke-width="2.8" stroke-linecap="round"/><line x1="2166" y1="1377.7" x2="2166" y2="1381.2" stroke="#cc9e00" stroke-width="2.8" stroke-linecap="round"/><line x1="2166" y1="1415.2" x2="2166" y2="1418.7" stroke="#cc9e00" stroke-width="2.8" stroke-linecap="round"/><line x1="2145.5" y1="1398.2" x2="2149" y2="1398.2" stroke="#cc9e00" stroke-width="2.8" stroke-linecap="round"/><line x1="2183" y1="1398.2" x2="2186.5" y2="1398.2" stroke="#cc9e00" stroke-width="2.8" stroke-linecap="round"/><line x1="2173" y1="1377.7" x2="2173" y2="1381.2" stroke="#cc9e00" stroke-width="2.8" stroke-linecap="round"/><line x1="2173" y1="1415.2" x2="2173" y2="1418.7" stroke="#cc9e00" stroke-width="2.8" stroke-linecap="round"/><line x1="2145.5" y1="1405.2" x2="2149" y2="1405.2" stroke="#cc9e00" stroke-width="2.8" stroke-linecap="round"/><line x1="2183" y1="1405.2" x2="2186.5" y2="1405.2" stroke="#cc9e00" stroke-width="2.8" stroke-linecap="round"/><circle cx="2965.8" cy="1387.2" r="8.1" fill="none" stroke="#cc9e00" stroke-width="2.6"/><path d="M2950.2,1413.7 L2950.2,1407.7 Q2950.2,1400.2 2961,1399.4 Q2967,1398.7 2972,1399.9" fill="none" stroke="#cc9e00" stroke-width="2.6" stroke-linecap="round"/><path d="M2977,1405.2 L2967.8,1405.2 L2967.8,1417.4 L2987.3,1417.4 L2987.3,1405.2 L2982,1405.2" fill="none" stroke="#cc9e00" stroke-width="2.6"/><line x1="2978" y1="1400.2" x2="2978" y2="1406.7" stroke="#cc9e00" stroke-width="2.6"/><line x1="2974.5" y1="1411.5" x2="2981.5" y2="1411.5" stroke="#cc9e00" stroke-width="2.3"/><path d="M3755.5,1383.7 L3771.5,1380.7 L3787.5,1398.2 L3771,1415.7 L3753,1399.2Z" fill="#cc9e00" stroke="#cc9e00" stroke-width="6" stroke-linejoin="round"/><circle cx="3763" cy="1391.8" r="3.9" fill="#fff"/><text x="0" y="0" transform="translate(3773.2,1401.7) rotate(40)" font-family="Liberation Sans" font-weight="bold" font-size="19" fill="#fff" text-anchor="middle" dominant-baseline="central">$</text><rect x="47" y="52.5" width="42" height="3" fill="#111"/><rect x="47" y="62.5" width="42" height="3" fill="#111"/><rect x="47" y="72.5" width="42" height="3" fill="#111"/><rect x="47" y="82.5" width="42" height="3" fill="#111"/><circle cx="213.4" cy="67.2" r="32.8" fill="none" stroke="#e0e0e0" stroke-width="5"/><polygon points="230.40,50.50 222.70,77.00 196.00,84.40 203.80,57.90" fill="#e0e0e0" stroke="#e0e0e0" stroke-width="2.5" stroke-linejoin="round"/><polygon points="207.30,62.00 218.50,72.80 202.90,77.70" fill="#333"/><circle cx="3433.6" cy="56" r="4" fill="#333"/><circle cx="3433.6" cy="68" r="4" fill="#333"/><circle cx="3433.6" cy="80.5" r="4" fill="#333"/><circle cx="3546.5" cy="63.5" r="15.5" fill="none" stroke="#333" stroke-width="3.2"/><line x1="3557.68" y1="74.24" x2="3572" y2="88" stroke="#333" stroke-width="3.5200000000000005"/><path d="M4059.2,72 L4059.2,60 C4059.2,47 4069,38 4081.6,38 C4094.2,38 4104.1,47 4104.1,60 L4104.1,72 L4111.5,80 L4111.5,84.3 L4051.2,84.3 L4051.2,80 Z" fill="none" stroke="#3d3d3d" stroke-width="4.7" stroke-linejoin="miter"/><line x1="4081.6" y1="30.5" x2="4081.6" y2="38" stroke="#3d3d3d" stroke-width="4.7"/><path d="M4071.6,86 L4071.6,91 A10,10 0 0 0 4091.6,91 L4091.6,86" fill="none" stroke="#3d3d3d" stroke-width="4.7"/><path d="M4129.3,22.2 L4136.8,17.6 L4136.8,38.3" fill="none" stroke="#fff" stroke-width="3.3" stroke-linejoin="miter"/><circle cx="4227.3" cy="68.2" r="33.3" fill="none" stroke="#3d3d3d" stroke-width="4.7"/><path d="M4215.00,60.40 C4215.00,52.70 4220.80,48.60 4227.30,48.60 C4234.80,48.60 4239.10,53.70 4239.10,59.40 C4239.10,65.70 4233.30,67.70 4230.10,69.40 C4228.10,70.50 4227.30,72.00 4227.30,74.20 L4227.30,77.20" fill="none" stroke="#3d3d3d" stroke-width="4.7"/><circle cx="4227.30" cy="87.20" r="3.90" fill="#3d3d3d"/><g transform="translate(4377.5,73.2) rotate(45)"><rect x="-35.5" y="-6.4" width="71" height="12.8" rx="3" fill="none" stroke="#3d3d3d" stroke-width="4.7"/><line x1="-12.5" y1="-6.5" x2="-12.5" y2="6.5" stroke="#3d3d3d" stroke-width="4.7"/></g><path d="M4342,32.699999999999996 L4347.2,37.9 L4342,43.1 L4336.8,37.9 Z" fill="#3d3d3d"/><path d="M4372.3,32.699999999999996 L4377.5,37.9 L4372.3,43.1 L4367.1,37.9 Z" fill="#3d3d3d"/><path d="M4342,63.099999999999994 L4347.2,68.3 L4342,73.5 L4336.8,68.3 Z" fill="#3d3d3d"/><circle cx="4518.5" cy="68.3" r="34" fill="none" stroke="#3d3d3d" stroke-width="4.7"/><circle cx="4518.5" cy="60.6" r="10.6" fill="none" stroke="#3d3d3d" stroke-width="4.7"/><path d="M4501.3,96 C4500.3,87 4503.5,81.6 4512,81.6 L4525,81.6 C4533.5,81.6 4536.8,87 4535.8,96" fill="none" stroke="#3d3d3d" stroke-width="4.7"/><path d="M206,201.5 L190.5,216 L206,230.5" fill="none" stroke="#333" stroke-width="3"/><circle cx="68" cy="216" r="20.6" fill="none" stroke="#3a77ad" stroke-width="3.4"/><polygon points="78.68,205.51 73.84,222.15 57.07,226.80 61.97,210.16" fill="#3a77ad" stroke="#3a77ad" stroke-width="1.7" stroke-linejoin="round"/><polygon points="64.17,212.73 71.20,219.52 61.41,222.59" fill="#eef3f8"/><line x1="68.00" y1="294.00" x2="52.00" y2="277.50" stroke="#333" stroke-width="3"/><line x1="68.00" y1="294.00" x2="81.50" y2="280.50" stroke="#333" stroke-width="3"/><line x1="68.00" y1="294.00" x2="51.30" y2="309.50" stroke="#333" stroke-width="3"/><line x1="68.00" y1="294.00" x2="68.00" y2="311.00" stroke="#333" stroke-width="3"/><line x1="68.00" y1="294.00" x2="84.80" y2="309.50" stroke="#333" stroke-width="3"/><circle cx="68.00" cy="294.00" r="6.20" fill="#fff" stroke="#333" stroke-width="3"/><circle cx="52.00" cy="277.50" r="4.90" fill="#fff" stroke="#333" stroke-width="3"/><circle cx="81.50" cy="280.50" r="4.90" fill="#333"/><circle cx="51.30" cy="309.50" r="4.90" fill="#fff" stroke="#333" stroke-width="3"/><circle cx="68.00" cy="311.00" r="4.90" fill="#333"/><circle cx="84.80" cy="309.50" r="4.90" fill="#fff" stroke="#333" stroke-width="3"/><path d="M62.82,392.62 L48.03,392.62 L48.03,352.53 L76.59,352.53 L76.59,371.40" fill="none" stroke="#333" stroke-width="3" stroke-linejoin="round"/><path d="M48.03,365.28 L76.59,365.28 M48.03,378.74 L62.82,378.74" stroke="#333" stroke-width="3"/><circle cx="54.15" cy="358.65" r="1.84" fill="#333"/><circle cx="54.15" cy="372.11" r="1.84" fill="#333"/><circle cx="54.15" cy="385.48" r="1.84" fill="#333"/><path d="M64.04,384.66 C68.94,371.40 85.26,371.40 90.16,384.66 C85.26,397.92 68.94,397.92 64.04,384.66Z" fill="#333"/><circle cx="77.10" cy="384.66" r="6.32" fill="#fff"/><circle cx="77.10" cy="384.66" r="3.47" fill="#333"/><rect x="47.2" y="433.8" width="41.1" height="32" rx="2.5" fill="none" stroke="#333" stroke-width="3"/><line x1="67.75" y1="433.8" x2="67.75" y2="465.8" stroke="#333" stroke-width="3"/><line x1="52.5" y1="442" x2="63" y2="442" stroke="#333" stroke-width="3"/><line x1="72.5" y1="442" x2="83.5" y2="442" stroke="#333" stroke-width="3"/><line x1="52.5" y1="449.7" x2="63" y2="449.7" stroke="#333" stroke-width="3"/><line x1="72.5" y1="449.7" x2="83.5" y2="449.7" stroke="#333" stroke-width="3"/><line x1="52.5" y1="457.5" x2="63" y2="457.5" stroke="#333" stroke-width="3"/><line x1="72.5" y1="457.5" x2="83.5" y2="457.5" stroke="#333" stroke-width="3"/><rect x="54.3" y="507" width="31.2" height="41.2" rx="2.5" fill="none" stroke="#333" stroke-width="3"/><line x1="48.8" y1="516.5" x2="58" y2="516.5" stroke="#333" stroke-width="3"/><line x1="65.5" y1="516.5" x2="77.5" y2="516.5" stroke="#333" stroke-width="3"/><line x1="48.8" y1="527.5" x2="58" y2="527.5" stroke="#333" stroke-width="3"/><line x1="65.5" y1="527.5" x2="77.5" y2="527.5" stroke="#333" stroke-width="3"/><line x1="48.8" y1="538.5" x2="58" y2="538.5" stroke="#333" stroke-width="3"/><line x1="65.5" y1="538.5" x2="77.5" y2="538.5" stroke="#333" stroke-width="3"/><path d="M47.2,583 L47.2,626.5 L90.7,626.5" fill="none" stroke="#333" stroke-width="3"/><path d="M53,615.3 L63.3,604 L71.7,611.5 L88.4,595.5" fill="none" stroke="#333" stroke-width="3"/><path d="M78.7,595 L89.3,595 L89.3,605.5" fill="none" stroke="#333" stroke-width="3"/><path d="M47,776 L47,741.2 L62,741.2 L68.5,747.5 L89,747.5 L89,776 Z" fill="none" stroke="#333" stroke-width="3" stroke-linejoin="round"/><line x1="47.5" y1="822.5" x2="64" y2="822.5" stroke="#333" stroke-width="2.8"/><line x1="70" y1="822.5" x2="88.6" y2="822.5" stroke="#333" stroke-width="2.8"/><line x1="47.5" y1="831.8" x2="56" y2="831.8" stroke="#333" stroke-width="2.8"/><line x1="61" y1="831.8" x2="75.5" y2="831.8" stroke="#333" stroke-width="2.8"/><line x1="80.5" y1="831.8" x2="88.6" y2="831.8" stroke="#333" stroke-width="2.8"/><line x1="47.5" y1="841.5" x2="88.6" y2="841.5" stroke="#333" stroke-width="2.8"/><line x1="47.5" y1="852" x2="80" y2="852" stroke="#333" stroke-width="2.8"/><line x1="84" y1="852" x2="88.6" y2="852" stroke="#333" stroke-width="2.8"/><rect x="47" y="896.5" width="9" height="9" fill="none" stroke="#333" stroke-width="3"/><rect x="80" y="896.5" width="9" height="9" fill="none" stroke="#333" stroke-width="3"/><rect x="47" y="924" width="9" height="9" fill="none" stroke="#333" stroke-width="3"/><path d="M56,901 L80,901 M68,901 L68,920 Q68,928.5 59,928.5 L56,928.5" fill="none" stroke="#333" stroke-width="3"/><path d="M45,993.4 L53,993.4 L61.7,1011.5 L75.5,974.6 L82.5,993.4 L91.2,993.4" fill="none" stroke="#333" stroke-width="3" stroke-linejoin="miter"/><circle cx="61.3" cy="1135.4" r="9.8" fill="none" stroke="#333" stroke-width="3"/><path d="M46.8,1169.5 L46.8,1163 Q46.8,1151.8 61.5,1151.8 Q76.2,1151.8 76.2,1163 L76.2,1169.5" fill="none" stroke="#333" stroke-width="3"/><path d="M77,1145 L82.5,1150.4 L93,1139.5" fill="none" stroke="#333" stroke-width="3"/><rect x="50.8" y="1207" width="9.8" height="10.5" rx="2" fill="none" stroke="#333" stroke-width="3"/><rect x="68.2" y="1207" width="18.8" height="10.5" rx="2" fill="none" stroke="#333" stroke-width="3"/><rect x="50.8" y="1225.5" width="18.1" height="14.4" rx="2" fill="none" stroke="#333" stroke-width="3"/><rect x="76.5" y="1225.5" width="10.5" height="9.4" rx="2" fill="none" stroke="#333" stroke-width="3"/><circle cx="1186.5" cy="225" r="21" fill="none" stroke="#222" stroke-width="3"/><path d="M1178.75,220.09 C1178.75,215.24 1182.40,212.65 1186.50,212.65 C1191.22,212.65 1193.93,215.87 1193.93,219.46 C1193.93,223.43 1190.28,224.69 1188.26,225.76 C1187.00,226.45 1186.50,227.39 1186.50,228.78 L1186.50,230.67" fill="none" stroke="#222" stroke-width="3"/><circle cx="1186.50" cy="236.97" r="2.46" fill="#222"/><line x1="336.50" y1="336.30" x2="319.38" y2="318.64" stroke="#111" stroke-width="3.2"/><line x1="336.50" y1="336.30" x2="350.94" y2="321.86" stroke="#111" stroke-width="3.2"/><line x1="336.50" y1="336.30" x2="318.63" y2="352.88" stroke="#111" stroke-width="3.2"/><line x1="336.50" y1="336.30" x2="336.50" y2="354.49" stroke="#111" stroke-width="3.2"/><line x1="336.50" y1="336.30" x2="354.48" y2="352.88" stroke="#111" stroke-width="3.2"/><circle cx="336.50" cy="336.30" r="6.63" fill="#fff" stroke="#111" stroke-width="3.2"/><circle cx="319.38" cy="318.64" r="5.24" fill="#fff" stroke="#111" stroke-width="3.2"/><circle cx="350.94" cy="321.86" r="5.24" fill="#111"/><circle cx="318.63" cy="352.88" r="5.24" fill="#fff" stroke="#111" stroke-width="3.2"/><circle cx="336.50" cy="354.49" r="5.24" fill="#111"/><circle cx="354.48" cy="352.88" r="5.24" fill="#fff" stroke="#111" stroke-width="3.2"/><path d="M1162,328 L1188.6,328 L1175.3,345 Z" fill="#222"/><circle cx="332" cy="651.7" r="16.2" fill="none" stroke="#333" stroke-width="3.1"/><line x1="343.54" y1="663.06" x2="357.6" y2="676.9" stroke="#333" stroke-width="3.4100000000000006"/><path d="M318.5,788 L334,772.5 L349.5,788" fill="none" stroke="#333" stroke-width="3"/><path d="M408,771 L415.2,751.5 Q416.5,748.3 419.5,748.6 L427,750.8 L434.5,748.6 Q437.5,748.3 438.8,751.5 L446.2,771 Z" fill="#cca000"/><rect x="394.4" y="775.8" width="65.3" height="4.9" fill="#cca000"/><circle cx="410.3" cy="797" r="10.7" fill="none" stroke="#cca000" stroke-width="3.6"/><circle cx="443.8" cy="797" r="10.7" fill="none" stroke="#cca000" stroke-width="3.6"/><path d="M420.5,796 Q427,793 433.5,796" fill="none" stroke="#cca000" stroke-width="3.4"/><path d="M427,858.4 L458.6,890 L427,921.6 L395.4,890 Z" fill="none" stroke="#111" stroke-width="4.6" stroke-linejoin="round"/><path d="M427,1186.1000000000001 L458.6,1217.7 L427,1249.3 L395.4,1217.7 Z" fill="none" stroke="#111" stroke-width="4.6" stroke-linejoin="round"/><path d="M427,1295.4 L458.6,1327 L427,1358.6 L395.4,1327 Z" fill="none" stroke="#111" stroke-width="4.6" stroke-linejoin="round"/><path d="M427,1513.4 L458.6,1545 L427,1576.6 L395.4,1545 Z" fill="none" stroke="#111" stroke-width="4.6" stroke-linejoin="round"/><rect x="393" y="964" width="5.5" height="70" rx="2.5" fill="#cca000"/><rect x="418.8" y="969.5" width="24.19999999999999" height="10.100000000000023" rx="1.5" fill="none" stroke="#cca000" stroke-width="3.6"/><line x1="398" y1="974.55" x2="417" y2="974.55" stroke="#cca000" stroke-width="3.6"/><rect x="418.8" y="992.5" width="33.19999999999999" height="13.200000000000045" rx="1.5" fill="none" stroke="#cca000" stroke-width="3.6"/><line x1="398" y1="999.1" x2="417" y2="999.1" stroke="#cca000" stroke-width="3.6"/><rect x="418.8" y="1015.3" width="42.39999999999998" height="14.700000000000045" rx="1.5" fill="none" stroke="#cca000" stroke-width="3.6"/><line x1="398" y1="1022.65" x2="417" y2="1022.65" stroke="#cca000" stroke-width="3.6"/><path d="M400,1088 L431,1088 L431,1104 L447,1104 L447,1126 Q447,1136 437,1136 L410,1136 Q400,1136 400,1126 Z" fill="#cca000"/><path d="M415.5,1086 L415.5,1138 M431.5,1103 L431.5,1138 M398,1104 L432,1104 M398,1120 L449,1120" stroke="#fff" stroke-width="3"/><path d="M450.5,1074 L461,1084.5 L450.5,1095 L440,1084.5 Z" fill="#cca000" stroke="#cca000" stroke-width="2" stroke-linejoin="round"/><rect x="390" y="1408.2" width="73.9" height="55.3" fill="none" stroke="#cca000" stroke-width="3.6"/><path d="M392,1410 L419,1410 Q420,1416 415,1419 Q411,1421 410,1426 Q409,1433 404,1433 Q400,1428 397,1424 Q393,1420 392,1417 Z" fill="#cca000"/><path d="M437,1414 Q442,1410 450,1410 L462,1410 L462,1422 Q457,1425 454,1429 Q449,1430 447,1425 Q443,1421 438,1419 Z" fill="#cca000"/><ellipse cx="454.5" cy="1442" rx="4.5" ry="4.8" fill="#cca000"/><path d="M392,1463 L393,1458 Q400,1459 405,1456 Q409,1452 411,1455 L412,1463 Z M420,1463 Q430,1459 440,1460 L441,1463 Z" fill="#cca000"/><line x1="440.8" y1="1454.6" x2="455.2" y2="1472" stroke="#fff" stroke-width="12" stroke-linecap="round"/><circle cx="428.3" cy="1437.6" r="17" fill="#fff" stroke="#cca000" stroke-width="4"/><path d="M422,1429 Q428,1425.5 436,1428 Q439,1431 436.5,1435 Q433.5,1439 431,1444.5 Q428,1444 427,1438 Q421.5,1434 422,1429 Z" fill="#cca000"/><line x1="441.5" y1="1455.5" x2="455" y2="1471.5" stroke="#cca000" stroke-width="7" stroke-linecap="round"/><path d="M1340.58,243.05 L1342.56,236.72 L1353.44,236.72 L1355.42,243.05 L1356.37,243.60 L1362.85,242.15 L1368.28,251.56 L1363.79,256.45 L1363.79,257.55 L1368.28,262.44 L1362.85,271.85 L1356.37,270.40 L1355.42,270.95 L1353.44,277.28 L1342.56,277.28 L1340.58,270.95 L1339.63,270.40 L1333.15,271.85 L1327.72,262.44 L1332.21,257.55 L1332.21,256.45 L1327.72,251.56 L1333.15,242.15 L1339.63,243.60Z" fill="none" stroke="#333" stroke-width="3" stroke-linejoin="round"/><circle cx="1348" cy="257" r="8.1" fill="none" stroke="#333" stroke-width="3"/><circle cx="1435.8" cy="251.9" r="16.2" fill="none" stroke="#333" stroke-width="3.2"/><line x1="1447.28" y1="263.33" x2="1461" y2="277" stroke="#333" stroke-width="3.5200000000000005"/><path d="M4403.3,274.9 A18,18 0 1 0 4385.3,256.9 L4385.3,271" fill="none" stroke="#333" stroke-width="3.2"/><path d="M4376.8,262.6 L4385.4,271.4 L4394,262.6" fill="none" stroke="#333" stroke-width="3.2"/><circle cx="4478" cy="244" r="3.4" fill="#333"/><circle cx="4478" cy="257" r="3.4" fill="#333"/><circle cx="4478" cy="270" r="3.4" fill="#333"/><path d="M1484.5,384.4 L1484.5,347.2 M1475.3,356.2 L1484.5,347.0 L1493.7,356.2" fill="none" stroke="#333" stroke-width="3"/><path d="M1507.3999999999999,345.7 L1507.3999999999999,382.7 M1498.3999999999999,373.5 L1507.3999999999999,382.5 L1516.3999999999999,373.5" fill="none" stroke="#333" stroke-width="3"/><path d="M1541.0,346.8 L1576.7,346.8 L1576.7,354.8 L1564.0,367.8 L1564.0,382.8 L1553.6,382.8 L1553.6,367.8 L1541.0,354.8 Z" fill="none" stroke="#333" stroke-width="3" stroke-linejoin="round"/><path d="M2444.2,384.4 L2444.2,347.2 M2435,356.2 L2444.2,347.0 L2453.4,356.2" fill="none" stroke="#333" stroke-width="3"/><path d="M2467.1,345.7 L2467.1,382.7 M2458.1,373.5 L2467.1,382.5 L2476.1,373.5" fill="none" stroke="#333" stroke-width="3"/><path d="M2502.1,346.8 L2537.7999999999997,346.8 L2537.7999999999997,354.8 L2525.1,367.8 L2525.1,382.8 L2514.7,382.8 L2514.7,367.8 L2502.1,354.8 Z" fill="none" stroke="#333" stroke-width="3" stroke-linejoin="round"/><path d="M3272.2,384.4 L3272.2,347.2 M3263,356.2 L3272.2,347.0 L3281.4,356.2" fill="none" stroke="#333" stroke-width="3"/><path d="M3295.1,345.7 L3295.1,382.7 M3286.1,373.5 L3295.1,382.5 L3304.1,373.5" fill="none" stroke="#333" stroke-width="3"/><path d="M3329.5,346.8 L3365.2,346.8 L3365.2,354.8 L3352.5,367.8 L3352.5,382.8 L3342.1,382.8 L3342.1,367.8 L3329.5,354.8 Z" fill="none" stroke="#333" stroke-width="3" stroke-linejoin="round"/><path d="M3837.7999999999997,384.4 L3837.7999999999997,347.2 M3828.6,356.2 L3837.7999999999997,347.0 L3847.0,356.2" fill="none" stroke="#333" stroke-width="3"/><path d="M3860.7,345.7 L3860.7,382.7 M3851.7,373.5 L3860.7,382.5 L3869.7,373.5" fill="none" stroke="#333" stroke-width="3"/><path d="M3894.5,346.8 L3930.2,346.8 L3930.2,354.8 L3917.5,367.8 L3917.5,382.8 L3907.1,382.8 L3907.1,367.8 L3894.5,354.8 Z" fill="none" stroke="#333" stroke-width="3" stroke-linejoin="round"/><circle cx="2664.8" cy="453.9" r="3.2" fill="#333"/><circle cx="2664.8" cy="466.9" r="3.2" fill="#333"/><circle cx="2664.8" cy="480.1" r="3.2" fill="#333"/><path d="M1655.5,1485 L1667.7,1497.5 L1680,1485" fill="none" stroke="#333" stroke-width="3"/><path d="M4082,1485 L4094.3,1497.5 L4106.5,1485" fill="none" stroke="#333" stroke-width="3"/><path d="M4404,1481 L4391,1491 L4404,1501 Z" fill="#9e9e9e"/><path d="M4470.6,1481 L4484,1491 L4470.6,1501 Z" fill="#111"/></svg>
<div class="a" style="left:2644.8px;top:517.2px;width:39.6px;height:39.6px;transform-origin:center;transform:translate(0,0) rotate(45deg);background:#fff;box-shadow:-2px -2px 6px rgba(0,0,0,.16)"></div>
<div class="a" style="left:2356px;top:537px;width:618px;height:312px;background:#fff;border-radius:6px;box-shadow:0 11px 11px -7px rgba(0,0,0,.2),0 18px 22px 2px rgba(0,0,0,.14),0 7px 31px 4px rgba(0,0,0,.12)"></div>
<div class="a" style="left:2630px;top:537px;width:70px;height:12px;background:#fff"></div>
<div class="a" style="left:2357px;top:615.3px;width:616px;height:77.6px;background:#e8e8e8"></div>
<div class="t" style="left:2435.00px;top:557.86px;font-size:35.61px;color:#333">View in Knowledge Graph</div>
<div class="t" style="left:2433.96px;top:635.16px;font-size:35.61px;color:#333;transform:scaleX(1.0359)">Start visualisation from resource</div>
<div class="t" style="left:2433.02px;top:713.86px;font-size:35.61px;color:#333;transform:scaleX(0.9877)">Use in a query</div>
<div class="t" style="left:2433.99px;top:793.16px;font-size:35.61px;color:#333;transform:scaleX(1.0139)">Copy resource identifier</div>
<svg width="4579" height="1590" viewBox="0 0 4579 1590"><circle cx="2394.7" cy="575.9" r="20.9" fill="none" stroke="#333" stroke-width="3.5"/><polygon points="2405.53,565.26 2400.63,582.14 2383.61,586.86 2388.58,569.97" fill="#333" stroke="#333" stroke-width="1.75" stroke-linejoin="round"/><polygon points="2390.81,572.59 2397.95,579.47 2388.01,582.59" fill="#fff"/><line x1="2394.70" y1="653.50" x2="2377.90" y2="636.17" stroke="#333" stroke-width="3.2"/><line x1="2394.70" y1="653.50" x2="2408.88" y2="639.33" stroke="#333" stroke-width="3.2"/><line x1="2394.70" y1="653.50" x2="2377.16" y2="669.77" stroke="#333" stroke-width="3.2"/><line x1="2394.70" y1="653.50" x2="2394.70" y2="671.35" stroke="#333" stroke-width="3.2"/><line x1="2394.70" y1="653.50" x2="2412.34" y2="669.77" stroke="#333" stroke-width="3.2"/><circle cx="2394.70" cy="653.50" r="6.51" fill="#e8e8e8" stroke="#333" stroke-width="3.2"/><circle cx="2377.90" cy="636.17" r="5.15" fill="#e8e8e8" stroke="#333" stroke-width="3.2"/><circle cx="2408.88" cy="639.33" r="5.15" fill="#333"/><circle cx="2377.16" cy="669.77" r="5.15" fill="#e8e8e8" stroke="#333" stroke-width="3.2"/><circle cx="2394.70" cy="671.35" r="5.15" fill="#333"/><circle cx="2412.34" cy="669.77" r="5.15" fill="#e8e8e8" stroke="#333" stroke-width="3.2"/><path d="M2390.60,752.20 L2376.10,752.20 L2376.10,712.90 L2404.10,712.90 L2404.10,731.40" fill="none" stroke="#333" stroke-width="3.2" stroke-linejoin="round"/><path d="M2376.10,725.40 L2404.10,725.40 M2376.10,738.60 L2390.60,738.60" stroke="#333" stroke-width="3.2"/><circle cx="2382.10" cy="718.90" r="1.80" fill="#333"/><circle cx="2382.10" cy="732.10" r="1.80" fill="#333"/><circle cx="2382.10" cy="745.20" r="1.80" fill="#333"/><path d="M2391.80,744.40 C2396.60,731.40 2412.60,731.40 2417.40,744.40 C2412.60,757.40 2396.60,757.40 2391.80,744.40Z" fill="#333"/><circle cx="2404.60" cy="744.40" r="6.20" fill="#fff"/><circle cx="2404.60" cy="744.40" r="3.40" fill="#333"/><path d="M2381.8,795.2 L2377.2,795.2 Q2374,795.2 2374,798.4 L2374,827.4 Q2374,830.6 2377.2,830.6 L2406.2,830.6 Q2409.4,830.6 2409.4,827.4 L2409.4,813" fill="none" stroke="#333" stroke-width="3.1"/><path d="M2392.2,810.7 A6,6 0 0 1 2383.8,802.3 L2393.3,792.8 A6,6 0 0 1 2401.7,801.2" fill="none" stroke="#333" stroke-width="3.1"/><path d="M2406.3,790.3 A6,6 0 0 1 2414.7,798.7 L2405.2,808.2 A6,6 0 0 1 2396.8,799.8" fill="none" stroke="#333" stroke-width="3.1"/></svg>
</body></html>
